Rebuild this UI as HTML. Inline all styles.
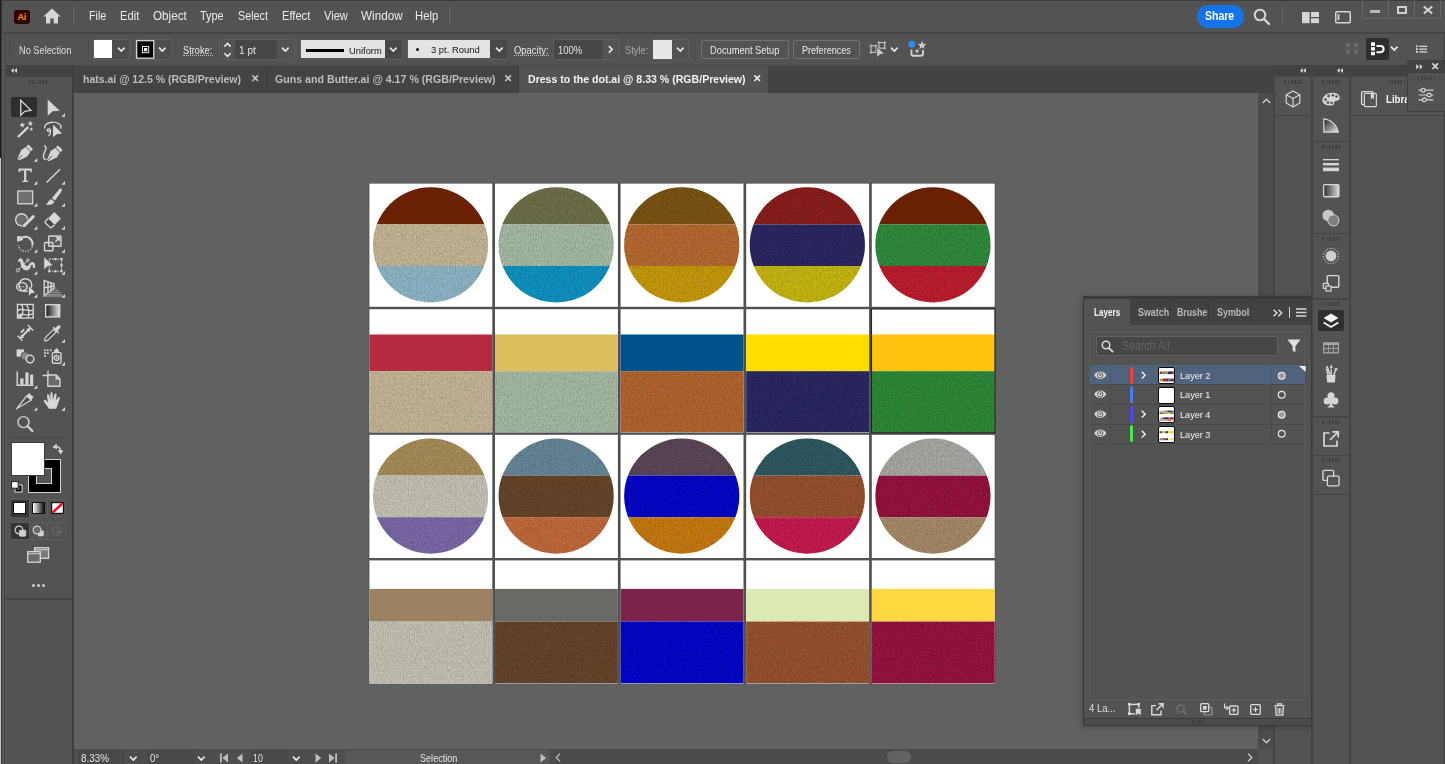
<!DOCTYPE html>
<html lang="en"><head><meta charset="utf-8"><title>Dress to the dot.ai @ 8.33 % (RGB/Preview)</title>
<style>
html,body{margin:0;padding:0;}
body{width:1445px;height:764px;overflow:hidden;background:#535353;position:relative;
font-family:"Liberation Sans",sans-serif;font-size:12px;color:#dddddd;}
div,svg{position:absolute;box-sizing:border-box;}
.t{white-space:nowrap;}
svg{overflow:visible;}
</style></head><body>

<div style="left:74px;top:92.7px;width:1184px;height:656.3px;background:#616161;"></div>
<div style="left:74px;top:65px;width:1199px;height:27.8px;background:#434343;"></div>
<div style="left:0px;top:32px;width:1445px;height:1.5px;background:#464646;"></div>
<div style="left:5px;top:64.5px;width:1445px;height:1px;background:#484848;"></div>
<div style="left:0px;top:0px;width:1445px;height:1px;background:#3c3c3c;"></div>
<div style="left:0px;top:0px;width:1px;height:158px;background:#1c1c1c;"></div>
<div style="left:0px;top:158px;width:1px;height:764px;background:#c4c4c4;"></div>
<div style="left:1px;top:0px;width:1px;height:764px;background:#363636;"></div>
<div style="left:2px;top:33px;width:1.8px;height:764px;background:#585858;"></div>
<div style="left:3.8px;top:33px;width:1.7px;height:764px;background:#474747;"></div>
<div style="left:1443px;top:33px;width:2px;height:764px;background:#474747;"></div>
<div style="left:14.3px;top:9.7px;width:15.4px;height:14.4px;background:#330000;border-radius:3px;"></div>
<div class="t" style="left:17.4px;top:9.8px;font-size:9px;color:#ff9a00;line-height:13px;font-weight:bold;line-height:14.4px;letter-spacing:-0.2px;">Ai</div>
<svg style="left:42.6px;top:8.2px;" width="18" height="16" viewBox="0 0 18 16"><path d="M9 0.6 L0.4 8.6 H3 V15.4 H7.3 V10.6 H10.7 V15.4 H15 V8.6 H17.6 Z" fill="#d6d6d6"/></svg>
<div style="left:73.2px;top:6.6px;width:1.7px;height:19.4px;background:#5e5e5e;"></div>
<div class="t" style="transform:scaleX(0.8943);transform-origin:0 50%;left:89px;top:7.6px;font-size:12px;line-height:16px;color:#ececec;">File</div>
<div class="t" style="transform:scaleX(0.9329);transform-origin:0 50%;left:120.3px;top:7.6px;font-size:12px;line-height:16px;color:#ececec;">Edit</div>
<div class="t" style="transform:scaleX(0.9715);transform-origin:0 50%;left:152.8px;top:7.6px;font-size:12px;line-height:16px;color:#ececec;">Object</div>
<div class="t" style="transform:scaleX(0.9110);transform-origin:0 50%;left:200.3px;top:7.6px;font-size:12px;line-height:16px;color:#ececec;">Type</div>
<div class="t" style="transform:scaleX(0.8963);transform-origin:0 50%;left:237.9px;top:7.6px;font-size:12px;line-height:16px;color:#ececec;">Select</div>
<div class="t" style="transform:scaleX(0.9288);transform-origin:0 50%;left:281.7px;top:7.6px;font-size:12px;line-height:16px;color:#ececec;">Effect</div>
<div class="t" style="transform:scaleX(0.9265);transform-origin:0 50%;left:323.9px;top:7.6px;font-size:12px;line-height:16px;color:#ececec;">View</div>
<div class="t" style="transform:scaleX(0.9745);transform-origin:0 50%;left:361.1px;top:7.6px;font-size:12px;line-height:16px;color:#ececec;">Window</div>
<div class="t" style="transform:scaleX(0.9397);transform-origin:0 50%;left:415.3px;top:7.6px;font-size:12px;line-height:16px;color:#ececec;">Help</div>
<div style="left:449.2px;top:6.6px;width:1.8px;height:19px;background:#5e5e5e;"></div>
<div style="left:1196.5px;top:4.5px;width:47px;height:23px;background:#1473e6;border-radius:12px;"></div>
<div class="t" style="transform:scaleX(0.8753);transform-origin:0 50%;left:1205.3px;top:8.4px;font-size:12px;line-height:16px;color:#fff;font-weight:bold;">Share</div>
<svg style="left:1253px;top:8px;" width="18" height="18" viewBox="0 0 18 18"><circle cx="7" cy="7" r="5.3" fill="none" stroke="#d6d6d6" stroke-width="2"/><path d="M11 11 L16 16" stroke="#d6d6d6" stroke-width="2.4" stroke-linecap="round"/></svg>
<div style="left:1282px;top:7px;width:1px;height:18px;background:#666;"></div>
<svg style="left:1302px;top:11.7px;" width="17" height="11.2" viewBox="0 0 17 11.2"><rect x="0" y="0" width="7.6" height="11.2" fill="#d6d6d6"/><rect x="9" y="0" width="8" height="5" fill="#d6d6d6"/><rect x="9" y="6.3" width="8" height="4.9" fill="#d6d6d6"/></svg>
<svg style="left:1335px;top:10.5px;" width="16" height="12.5" viewBox="0 0 16 12.5"><rect x="0.75" y="0.75" width="14.5" height="11" rx="1" fill="none" stroke="#d6d6d6" stroke-width="1.5"/><rect x="2.6" y="3" width="1.8" height="6" fill="#d6d6d6"/></svg>
<div style="left:1362px;top:-2px;width:79px;height:20.5px;border:1px solid #666;border-radius:3px;"></div>
<div style="left:1388px;top:0px;width:1px;height:18.5px;background:#666;"></div>
<div style="left:1414px;top:0px;width:1px;height:18.5px;background:#666;"></div>
<div style="left:1370.3px;top:10.2px;width:10px;height:3px;background:#b8b8b8;"></div>
<div style="left:1396.5px;top:6px;width:10px;height:7.5px;border:2px solid #cfcfcf;"></div>
<svg style="left:1423px;top:6px;" width="10" height="8" viewBox="0 0 10 8"><path d="M0.8 0.5 L9.2 7.5 M9.2 0.5 L0.8 7.5" stroke="#cfcfcf" stroke-width="2.2"/></svg>
<div style="left:9px;top:40.5px;width:1.4px;height:1.3px;background:#3f3f3f;"></div>
<div style="left:9px;top:43.1px;width:1.4px;height:1.3px;background:#3f3f3f;"></div>
<div style="left:9px;top:45.7px;width:1.4px;height:1.3px;background:#3f3f3f;"></div>
<div style="left:9px;top:48.3px;width:1.4px;height:1.3px;background:#3f3f3f;"></div>
<div style="left:9px;top:50.9px;width:1.4px;height:1.3px;background:#3f3f3f;"></div>
<div style="left:9px;top:53.5px;width:1.4px;height:1.3px;background:#3f3f3f;"></div>
<div style="left:9px;top:56.1px;width:1.4px;height:1.3px;background:#3f3f3f;"></div>
<div class="t" style="transform:scaleX(0.9223);transform-origin:0 50%;left:18.7px;top:43.2px;font-size:10px;line-height:15px;color:#dcdcdc;">No Selection</div>
<div style="left:87.5px;top:37px;width:1px;height:24px;background:#4c4c4c;"></div>
<div style="left:93px;top:39px;width:37px;height:21px;border:1px solid #5e5e5e;border-radius:2px;"></div>
<div style="left:112px;top:40px;width:17px;height:19px;background:#4e4e4e;"></div>
<div style="left:94px;top:40.3px;width:18px;height:18px;background:#ffffff;"></div>
<svg style="left:116.5px;top:46.2px;" width="8.6" height="6.6" viewBox="0 0 8.6 6.6"><path d="M1 1.65 L4.30 5.12 L7.60 1.65" fill="none" stroke="#ececec" stroke-width="1.6"/></svg>
<div style="left:135px;top:39px;width:37px;height:21px;border:1px solid #5e5e5e;border-radius:2px;"></div>
<div style="left:154px;top:40px;width:17px;height:19px;background:#4e4e4e;"></div>
<svg style="left:135.8px;top:40px;" width="18.4" height="18.8" viewBox="0 0 18.4 18.8"><rect x="0.65" y="0.65" width="17.1" height="17.5" fill="#000" stroke="#d4d4d4" stroke-width="1.3"/><rect x="6.5" y="6.5" width="6.2" height="6.2" fill="none" stroke="#e4e4e4" stroke-width="1"/><rect x="8" y="8" width="3.3" height="3.3" fill="#f4f4f4"/></svg>
<svg style="left:158.2px;top:46.2px;" width="8.6" height="6.6" viewBox="0 0 8.6 6.6"><path d="M1 1.65 L4.30 5.12 L7.60 1.65" fill="none" stroke="#ececec" stroke-width="1.6"/></svg>
<div class="t" style="transform:scaleX(0.9215);transform-origin:0 50%;left:183.4px;top:43.2px;font-size:10px;line-height:15px;color:#e8e8e8;">Stroke:</div>
<div style="left:183.4px;top:55.4px;width:29.2px;height:1px;border-top:1px dotted #bdbdbd;"></div>
<div style="left:219px;top:39px;width:75.5px;height:21px;border:1px solid #5e5e5e;border-radius:2px;"></div>
<svg style="left:222.6px;top:41.5px;" width="9" height="16" viewBox="0 0 9 16"><path d="M1.3 4.6 L4.5 1.4 L7.7 4.6 M1.3 11.2 L4.5 14.4 L7.7 11.2" fill="none" stroke="#ececec" stroke-width="1.5"/></svg>
<div style="left:235px;top:40px;width:41.5px;height:19px;background:#464646;"></div>
<div class="t" style="transform:scaleX(1.0067);transform-origin:0 50%;left:238.5px;top:43.2px;font-size:10px;line-height:15px;color:#e2e2e2;">1 pt</div>
<svg style="left:280.7px;top:46.2px;" width="8.6" height="6.6" viewBox="0 0 8.6 6.6"><path d="M1 1.65 L4.30 5.12 L7.60 1.65" fill="none" stroke="#ececec" stroke-width="1.6"/></svg>
<div style="left:300px;top:39.5px;width:103px;height:20px;border:1px solid #5e5e5e;border-radius:2px;"></div>
<div style="left:300.6px;top:40.2px;width:84.5px;height:18px;background:#e3e3e3;"></div>
<div style="left:385.1px;top:40.2px;width:16.9px;height:18px;background:#484848;"></div>
<div style="left:306px;top:49px;width:38px;height:3px;background:#000;"></div>
<div class="t" style="transform:scaleX(0.9564);transform-origin:0 50%;left:348.5px;top:44.2px;font-size:9.8px;line-height:14px;color:#141418;">Uniform</div>
<svg style="left:389.4px;top:46.2px;" width="8.6" height="6.6" viewBox="0 0 8.6 6.6"><path d="M1 1.65 L4.30 5.12 L7.60 1.65" fill="none" stroke="#ececec" stroke-width="1.6"/></svg>
<div style="left:407.3px;top:39.5px;width:100px;height:20px;border:1px solid #5e5e5e;border-radius:2px;"></div>
<div style="left:408.2px;top:40.2px;width:81.6px;height:18px;background:#e3e3e3;"></div>
<div style="left:489.8px;top:40.2px;width:17px;height:18px;background:#484848;"></div>
<div style="left:415.9px;top:48.3px;width:2.9px;height:2.9px;background:#111;border-radius:2px;"></div>
<div class="t" style="transform:scaleX(0.9614);transform-origin:0 50%;left:431.2px;top:43.1px;font-size:9.8px;line-height:14px;color:#141418;">3 pt. Round</div>
<svg style="left:494.7px;top:46.2px;" width="8.6" height="6.6" viewBox="0 0 8.6 6.6"><path d="M1 1.65 L4.30 5.12 L7.60 1.65" fill="none" stroke="#ececec" stroke-width="1.6"/></svg>
<div class="t" style="transform:scaleX(0.9431);transform-origin:0 50%;left:514.2px;top:43.2px;font-size:10px;line-height:15px;color:#e8e8e8;">Opacity:</div>
<div style="left:514.2px;top:55.4px;width:34.6px;height:1px;border-top:1px dotted #bdbdbd;"></div>
<div style="left:553px;top:39px;width:66px;height:21px;border:1px solid #5e5e5e;border-radius:2px;"></div>
<div style="left:554px;top:40px;width:48.3px;height:19px;background:#464646;"></div>
<div class="t" style="transform:scaleX(0.9461);transform-origin:0 50%;left:558.4px;top:43.2px;font-size:10px;line-height:15px;color:#e2e2e2;">100%</div>
<svg style="left:607.2px;top:45.2px;" width="6.6" height="8.6" viewBox="0 0 6.6 8.6"><path d="M1.81 1 L5.12 4.30 L1.81 7.60" fill="none" stroke="#ececec" stroke-width="1.6"/></svg>
<div class="t" style="transform:scaleX(0.9314);transform-origin:0 50%;left:624.5px;top:43.2px;font-size:10px;line-height:15px;color:#a8a8a8;">Style:</div>
<div style="left:652.5px;top:39px;width:36.5px;height:21px;border:1px solid #5e5e5e;border-radius:2px;"></div>
<div style="left:653.4px;top:40.3px;width:18.3px;height:18.3px;background:#e6e6e6;"></div>
<svg style="left:676.0px;top:46.2px;" width="8.6" height="6.6" viewBox="0 0 8.6 6.6"><path d="M1 1.65 L4.30 5.12 L7.60 1.65" fill="none" stroke="#ececec" stroke-width="1.6"/></svg>
<div style="left:695px;top:37px;width:1px;height:24px;background:#4c4c4c;"></div>
<div style="left:701px;top:40px;width:87.5px;height:19px;border:1px solid #717171;border-radius:2px;"></div>
<div class="t" style="transform:scaleX(0.9329);transform-origin:0 50%;left:710.2px;top:43.2px;font-size:10px;line-height:15px;color:#e8e8e8;">Document Setup</div>
<div style="left:793.3px;top:40px;width:66.5px;height:19px;border:1px solid #717171;border-radius:2px;"></div>
<div class="t" style="transform:scaleX(0.9050);transform-origin:0 50%;left:802.3px;top:43.2px;font-size:10px;line-height:15px;color:#e8e8e8;">Preferences</div>
<svg style="left:868px;top:40px;" width="20" height="19" viewBox="0 0 20 19"><g fill="none" stroke="#bdbdbd" stroke-width="1.2"><rect x="3" y="5.8" width="5" height="6.6"/><path d="M1.6 5.8 H3 V4.4 M8 4.4 V5.8 H9.4 M1.6 12.4 H3 V13.8"/><rect x="11" y="2.6" width="5.6" height="5.6"/><path d="M9.6 2.6 H11 V1.2 M16.6 1.2 V2.6 H18 M16.6 9.6 V8.2 H18 M9.6 8.2 H11"/></g><path d="M8.9 7 V17.4 L12 14.6 L16.4 13.7 Z" fill="#cfcfcf" stroke="#535353" stroke-width="0.7"/></svg>
<svg style="left:890.3000000000001px;top:45.6px;" width="8.6" height="6.6" viewBox="0 0 8.6 6.6"><path d="M1 1.65 L4.30 5.12 L7.60 1.65" fill="none" stroke="#ececec" stroke-width="1.6"/></svg>
<svg style="left:907px;top:39px;" width="20" height="20" viewBox="0 0 20 20"><path d="M4.4 10.4 V14.8 a2 2 0 0 0 2 2 H14 a2 2 0 0 0 2 -2 V11" fill="none" stroke="#cfcfcf" stroke-width="1.9"/><path d="M15.00 1.80 L16.14 4.84 L19.37 4.98 L16.84 7.00 L17.70 10.12 L15.00 8.33 L12.30 10.12 L13.16 7.00 L10.63 4.98 L13.86 4.84 Z" fill="#cfcfcf"/><path d="M10.00 9.60 L10.64 11.32 L12.47 11.40 L11.04 12.54 L11.53 14.30 L10.00 13.29 L8.47 14.30 L8.96 12.54 L7.53 11.40 L9.36 11.32 Z" fill="#cfcfcf"/><circle cx="4.8" cy="5.2" r="3.5" fill="#2d8ceb"/></svg>
<svg style="left:1346px;top:43px;" width="13" height="12" viewBox="0 0 13 12"><g fill="#6b6b6b"><rect x="0" y="0" width="4" height="4"/><rect x="8" y="0" width="4" height="4"/><rect x="0" y="7" width="4" height="4"/><rect x="8" y="7" width="4" height="4"/></g><path d="M6 -1 V12 M-1 5.5 H13" stroke="#606060" stroke-width="0.7"/></svg>
<div style="left:1366px;top:38px;width:22.5px;height:22px;background:#2e2e2e;border-radius:2px;"></div>
<svg style="left:1369.5px;top:41px;" width="16" height="16" viewBox="0 0 16 16"><g fill="#fff"><rect x="1" y="1.3" width="4" height="3.6" rx="0.6"/><rect x="1" y="6" width="4" height="3.6" rx="0.6"/><rect x="1" y="10.7" width="4" height="3.6" rx="0.6"/></g><path d="M6.5 5 H10.5 a3 3 0 0 1 0 6.2 H6.5" fill="none" stroke="#fff" stroke-width="2"/></svg>
<svg style="left:1390.3px;top:45.2px;" width="8.6" height="6.6" viewBox="0 0 8.6 6.6"><path d="M1 1.65 L4.30 5.12 L7.60 1.65" fill="none" stroke="#ececec" stroke-width="1.6"/></svg>
<svg style="left:1416.3px;top:45.2px;" width="11.4" height="8.4" viewBox="0 0 11.4 8.4"><g fill="#d6d6d6"><rect x="0" y="0.4" width="1.9" height="1.9"/><rect x="0" y="3.2" width="1.9" height="1.9"/><rect x="0" y="6" width="1.9" height="1.9"/><rect x="3.2" y="0.7" width="8" height="1.3"/><rect x="3.2" y="3.5" width="8" height="1.3"/><rect x="3.2" y="6.3" width="8" height="1.3"/></g></svg>
<div style="left:265.5px;top:66px;width:1px;height:26px;background:#3a3a3a;"></div>
<div style="left:518px;top:66px;width:1px;height:26px;background:#3a3a3a;"></div>
<div style="left:518.8px;top:65.5px;width:249px;height:27.3px;background:#535353;"></div>
<div class="t" style="transform:scaleX(1.0001);transform-origin:0 50%;left:83px;top:71.7px;font-size:10.5px;line-height:15px;color:#bcbcbc;font-weight:bold;">hats.ai @ 12.5 % (RGB/Preview)</div>
<svg style="left:252.10000000000002px;top:75.39999999999999px;" width="6.4" height="6.4" viewBox="0 0 6.4 6.4"><path d="M0.4 0.4 L6.0 6.0 M6.0 0.4 L0.4 6.0" stroke="#c4c4c4" stroke-width="1.6"/></svg>
<div class="t" style="transform:scaleX(1.0121);transform-origin:0 50%;left:275.4px;top:71.7px;font-size:10.5px;line-height:15px;color:#bcbcbc;font-weight:bold;">Guns and Butter.ai @ 4.17 % (RGB/Preview)</div>
<svg style="left:504.8px;top:75.39999999999999px;" width="6.4" height="6.4" viewBox="0 0 6.4 6.4"><path d="M0.4 0.4 L6.0 6.0 M6.0 0.4 L0.4 6.0" stroke="#c4c4c4" stroke-width="1.6"/></svg>
<div class="t" style="transform:scaleX(1.0064);transform-origin:0 50%;left:527.5px;top:71.7px;font-size:10.5px;line-height:15px;color:#f4f4f4;font-weight:bold;">Dress to the dot.ai @ 8.33 % (RGB/Preview)</div>
<svg style="left:754.3px;top:75.39999999999999px;" width="6.4" height="6.4" viewBox="0 0 6.4 6.4"><path d="M0.4 0.4 L6.0 6.0 M6.0 0.4 L0.4 6.0" stroke="#f0f0f0" stroke-width="1.6"/></svg>
<div style="left:1258px;top:92.7px;width:15px;height:656.3px;background:#4c4c4c;"></div>
<svg style="left:1261.5px;top:98px;" width="9" height="6" viewBox="0 0 9 6"><path d="M0.8 5 L4.5 1.2 L8.2 5" fill="none" stroke="#cfcfcf" stroke-width="1.3"/></svg>
<svg style="left:1261.5px;top:738px;" width="9" height="6" viewBox="0 0 9 6"><path d="M0.8 1 L4.5 4.8 L8.2 1" fill="none" stroke="#cfcfcf" stroke-width="1.3"/></svg>
<div style="left:1258px;top:749px;width:15px;height:15px;background:#535353;"></div>
<div style="left:1272.6px;top:65px;width:2.2px;height:764px;background:#454545;"></div>
<div style="left:74px;top:748.8px;width:1184px;height:16px;background:#4e4e4e;"></div>
<div style="left:78px;top:749.5px;width:47px;height:15px;background:#484848;"></div>
<div class="t" style="transform:scaleX(0.9402);transform-origin:0 50%;left:80.7px;top:751.3px;font-size:10.5px;line-height:15px;color:#e2e2e2;">8.33%</div>
<div style="left:125.8px;top:749.5px;width:15.5px;height:15px;background:#4c4c4c;"></div>
<svg style="left:129.2px;top:755.2px;" width="8.6" height="6.6" viewBox="0 0 8.6 6.6"><path d="M1 1.65 L4.30 5.12 L7.60 1.65" fill="none" stroke="#ececec" stroke-width="1.6"/></svg>
<div style="left:147.3px;top:749.5px;width:46.3px;height:15px;background:#484848;"></div>
<div class="t" style="transform:scaleX(0.9157);transform-origin:0 50%;left:149.6px;top:751.3px;font-size:10.5px;line-height:15px;color:#e2e2e2;">0°</div>
<div style="left:194.3px;top:749.5px;width:14.2px;height:15px;background:#4c4c4c;"></div>
<svg style="left:197.2px;top:755.2px;" width="8.6" height="6.6" viewBox="0 0 8.6 6.6"><path d="M1 1.65 L4.30 5.12 L7.60 1.65" fill="none" stroke="#ececec" stroke-width="1.6"/></svg>
<svg style="left:219px;top:752.5px;" width="10" height="10" viewBox="0 0 10 10"><rect x="1" y="0.5" width="1.8" height="9" fill="#bebebe"/><path d="M9 0.5 V9.5 L3.4 5 Z" fill="#bebebe"/></svg>
<svg style="left:235.5px;top:752.5px;" width="8" height="10" viewBox="0 0 8 10"><path d="M6.5 0.5 V9.5 L0.8 5 Z" fill="#bebebe"/></svg>
<div style="left:250.5px;top:749.5px;width:37.6px;height:15px;background:#484848;"></div>
<div class="t" style="transform:scaleX(0.8385);transform-origin:0 50%;left:253.2px;top:751.3px;font-size:10.5px;line-height:15px;color:#e2e2e2;">10</div>
<div style="left:289px;top:749.5px;width:14px;height:15px;background:#4c4c4c;"></div>
<svg style="left:291.9px;top:755.2px;" width="8.6" height="6.6" viewBox="0 0 8.6 6.6"><path d="M1 1.65 L4.30 5.12 L7.60 1.65" fill="none" stroke="#ececec" stroke-width="1.6"/></svg>
<svg style="left:313.5px;top:752.5px;" width="8" height="10" viewBox="0 0 8 10"><path d="M1.5 0.5 V9.5 L7.2 5 Z" fill="#bebebe"/></svg>
<svg style="left:328px;top:752.5px;" width="10" height="10" viewBox="0 0 10 10"><rect x="7.2" y="0.5" width="1.8" height="9" fill="#bebebe"/><path d="M1 0.5 V9.5 L6.6 5 Z" fill="#bebebe"/></svg>
<div style="left:344.8px;top:749.5px;width:205px;height:15px;background:#575757;border-radius:2px 2px 0 0;"></div>
<div class="t" style="transform:scaleX(0.8657);transform-origin:0 50%;left:420px;top:751.3px;font-size:10.5px;line-height:15px;color:#e2e2e2;">Selection</div>
<svg style="left:538.5px;top:752.5px;" width="8" height="10" viewBox="0 0 8 10"><path d="M1.5 0.5 V9.5 L7.2 5 Z" fill="#bebebe"/></svg>
<div style="left:550px;top:749px;width:708px;height:15px;background:#4b4b4b;"></div>
<svg style="left:555px;top:752.5px;" width="6" height="9" viewBox="0 0 6 9"><path d="M5 0.8 L1.2 4.5 L5 8.2" fill="none" stroke="#b8b8b8" stroke-width="1.3"/></svg>
<div style="left:887px;top:750.6px;width:24px;height:12.4px;background:#626262;border-radius:6.5px;"></div>
<svg style="left:1246.5px;top:752.5px;" width="6" height="9" viewBox="0 0 6 9"><path d="M1 0.8 L4.8 4.5 L1 8.2" fill="none" stroke="#cfcfcf" stroke-width="1.3"/></svg>
<svg style="left:0px;top:0px;pointer-events:none;" width="1445" height="764" viewBox="0 0 1445 764"><defs><pattern id="tex" width="2.6" height="2.6" patternUnits="userSpaceOnUse"><rect x="0" y="0" width="0.9" height="2.6" fill="#000" opacity="0.035"/><rect x="0" y="0" width="2.6" height="0.9" fill="#000" opacity="0.035"/></pattern><filter id="nzd" x="0" y="0" width="100%" height="100%" color-interpolation-filters="sRGB"><feTurbulence type="fractalNoise" baseFrequency="0.85 0.36" numOctaves="2" seed="4"/><feColorMatrix type="matrix" values="0 0 0 0 0  0 0 0 0 0  0 0 0 0 0  1.3 0 0 0 -0.45"/></filter><filter id="nzl" x="0" y="0" width="100%" height="100%" color-interpolation-filters="sRGB"><feTurbulence type="fractalNoise" baseFrequency="0.36 0.85" numOctaves="2" seed="11"/><feColorMatrix type="matrix" values="0 0 0 0 1  0 0 0 0 1  0 0 0 0 1  0 1.3 0 0 -0.45"/></filter><clipPath id="c00"><circle cx="430.55" cy="244.90" r="57.6"/></clipPath><clipPath id="c10"><circle cx="430.55" cy="496.10" r="57.6"/></clipPath><clipPath id="c01"><circle cx="556.15" cy="244.90" r="57.6"/></clipPath><clipPath id="c11"><circle cx="556.15" cy="496.10" r="57.6"/></clipPath><clipPath id="c02"><circle cx="681.75" cy="244.90" r="57.6"/></clipPath><clipPath id="c12"><circle cx="681.75" cy="496.10" r="57.6"/></clipPath><clipPath id="c03"><circle cx="807.35" cy="244.90" r="57.6"/></clipPath><clipPath id="c13"><circle cx="807.35" cy="496.10" r="57.6"/></clipPath><clipPath id="c04"><circle cx="932.95" cy="244.90" r="57.6"/></clipPath><clipPath id="c14"><circle cx="932.95" cy="496.10" r="57.6"/></clipPath></defs><rect x="368.59999999999997" y="182.79999999999998" width="626.90" height="501.40" fill="#515151"/><rect x="369.40" y="183.60" width="122.9" height="123.2" fill="#fff"/><rect x="495.00" y="183.60" width="122.9" height="123.2" fill="#fff"/><rect x="620.60" y="183.60" width="122.9" height="123.2" fill="#fff"/><rect x="746.20" y="183.60" width="122.9" height="123.2" fill="#fff"/><rect x="871.80" y="183.60" width="122.9" height="123.2" fill="#fff"/><rect x="369.40" y="309.20" width="122.9" height="123.2" fill="#fff"/><rect x="495.00" y="309.20" width="122.9" height="123.2" fill="#fff"/><rect x="620.60" y="309.20" width="122.9" height="123.2" fill="#fff"/><rect x="746.20" y="309.20" width="122.9" height="123.2" fill="#fff"/><rect x="871.80" y="309.20" width="122.9" height="123.2" fill="#fff"/><rect x="369.40" y="434.80" width="122.9" height="123.2" fill="#fff"/><rect x="495.00" y="434.80" width="122.9" height="123.2" fill="#fff"/><rect x="620.60" y="434.80" width="122.9" height="123.2" fill="#fff"/><rect x="746.20" y="434.80" width="122.9" height="123.2" fill="#fff"/><rect x="871.80" y="434.80" width="122.9" height="123.2" fill="#fff"/><rect x="369.40" y="560.40" width="122.9" height="123.2" fill="#fff"/><rect x="495.00" y="560.40" width="122.9" height="123.2" fill="#fff"/><rect x="620.60" y="560.40" width="122.9" height="123.2" fill="#fff"/><rect x="746.20" y="560.40" width="122.9" height="123.2" fill="#fff"/><rect x="871.80" y="560.40" width="122.9" height="123.2" fill="#fff"/><rect clip-path="url(#c00)" x="369.40" y="186.20" width="122.90" height="38.20" fill="#6a2103"/><rect clip-path="url(#c00)" x="369.40" y="224.40" width="122.90" height="41.60" fill="#c9b898"/><rect clip-path="url(#c00)" x="369.40" y="266.00" width="122.90" height="37.60" fill="#8fb9cb"/><rect clip-path="url(#c10)" x="369.40" y="437.40" width="122.90" height="38.20" fill="#a88f58"/><rect clip-path="url(#c10)" x="369.40" y="475.60" width="122.90" height="41.60" fill="#c9c5b8"/><rect clip-path="url(#c10)" x="369.40" y="517.20" width="122.90" height="37.60" fill="#7b68a8"/><rect x="369.40" y="334.50" width="122.90" height="36.70" fill="#b52a3c"/><rect x="369.40" y="371.20" width="122.90" height="60.80" fill="#c9b898"/><rect x="369.40" y="588.90" width="122.90" height="32.70" fill="#9c8162"/><rect x="369.40" y="621.60" width="122.90" height="61.60" fill="#c9c5b8"/><rect clip-path="url(#c01)" x="495.00" y="186.20" width="122.90" height="38.20" fill="#6f6f47"/><rect clip-path="url(#c01)" x="495.00" y="224.40" width="122.90" height="41.60" fill="#a8bda6"/><rect clip-path="url(#c01)" x="495.00" y="266.00" width="122.90" height="37.60" fill="#0a93c4"/><rect clip-path="url(#c11)" x="495.00" y="437.40" width="122.90" height="38.20" fill="#668799"/><rect clip-path="url(#c11)" x="495.00" y="475.60" width="122.90" height="41.60" fill="#654327"/><rect clip-path="url(#c11)" x="495.00" y="517.20" width="122.90" height="37.60" fill="#c4693a"/><rect x="495.00" y="334.50" width="122.90" height="36.70" fill="#dcbe5c"/><rect x="495.00" y="371.20" width="122.90" height="60.80" fill="#a8bda6"/><rect x="495.00" y="588.90" width="122.90" height="32.70" fill="#696a66"/><rect x="495.00" y="621.60" width="122.90" height="61.60" fill="#654327"/><rect clip-path="url(#c02)" x="620.60" y="186.20" width="122.90" height="38.20" fill="#7b540f"/><rect clip-path="url(#c02)" x="620.60" y="224.40" width="122.90" height="41.60" fill="#b96a2e"/><rect clip-path="url(#c02)" x="620.60" y="266.00" width="122.90" height="37.60" fill="#c89b08"/><rect clip-path="url(#c12)" x="620.60" y="437.40" width="122.90" height="38.20" fill="#5a4556"/><rect clip-path="url(#c12)" x="620.60" y="475.60" width="122.90" height="41.60" fill="#0000cc"/><rect clip-path="url(#c12)" x="620.60" y="517.20" width="122.90" height="37.60" fill="#c97a0d"/><rect x="620.60" y="334.50" width="122.90" height="36.70" fill="#00528a"/><rect x="620.60" y="371.20" width="122.90" height="60.80" fill="#b4642b"/><rect x="620.60" y="588.90" width="122.90" height="32.70" fill="#7a244c"/><rect x="620.60" y="621.60" width="122.90" height="61.60" fill="#0000cc"/><rect clip-path="url(#c03)" x="746.20" y="186.20" width="122.90" height="38.20" fill="#8a1b16"/><rect clip-path="url(#c03)" x="746.20" y="224.40" width="122.90" height="41.60" fill="#272560"/><rect clip-path="url(#c03)" x="746.20" y="266.00" width="122.90" height="37.60" fill="#c9b90e"/><rect clip-path="url(#c13)" x="746.20" y="437.40" width="122.90" height="38.20" fill="#2c5862"/><rect clip-path="url(#c13)" x="746.20" y="475.60" width="122.90" height="41.60" fill="#97502a"/><rect clip-path="url(#c13)" x="746.20" y="517.20" width="122.90" height="37.60" fill="#c9174f"/><rect x="746.20" y="334.50" width="122.90" height="36.70" fill="#ffdd00"/><rect x="746.20" y="371.20" width="122.90" height="60.80" fill="#272560"/><rect x="746.20" y="588.90" width="122.90" height="32.70" fill="#dde9b5"/><rect x="746.20" y="621.60" width="122.90" height="61.60" fill="#97502a"/><rect clip-path="url(#c04)" x="871.80" y="186.20" width="122.90" height="38.20" fill="#6a2103"/><rect clip-path="url(#c04)" x="871.80" y="224.40" width="122.90" height="41.60" fill="#2d8b3a"/><rect clip-path="url(#c04)" x="871.80" y="266.00" width="122.90" height="37.60" fill="#c01a2a"/><rect clip-path="url(#c14)" x="871.80" y="437.40" width="122.90" height="38.20" fill="#a9aaa5"/><rect clip-path="url(#c14)" x="871.80" y="475.60" width="122.90" height="41.60" fill="#960e3c"/><rect clip-path="url(#c14)" x="871.80" y="517.20" width="122.90" height="37.60" fill="#a98b68"/><rect x="871.80" y="334.50" width="122.90" height="36.70" fill="#ffc20f"/><rect x="871.80" y="371.20" width="122.90" height="60.80" fill="#2a8a35"/><rect x="871.80" y="588.90" width="122.90" height="32.70" fill="#ffd83f"/><rect x="871.80" y="621.60" width="122.90" height="61.60" fill="#960e3c"/><mask id="tm" maskUnits="userSpaceOnUse" x="360" y="175" width="645" height="520"><rect clip-path="url(#c00)" x="369.40" y="224.40" width="122.90" height="41.60" fill="#fff"/><rect clip-path="url(#c00)" x="369.40" y="266.00" width="122.90" height="37.60" fill="#fff"/><rect clip-path="url(#c10)" x="369.40" y="437.40" width="122.90" height="38.20" fill="#fff"/><rect clip-path="url(#c10)" x="369.40" y="475.60" width="122.90" height="41.60" fill="#fff"/><rect clip-path="url(#c10)" x="369.40" y="517.20" width="122.90" height="37.60" fill="#fff"/><rect x="369.40" y="371.20" width="122.90" height="60.80" fill="#fff"/><rect x="369.40" y="621.60" width="122.90" height="61.60" fill="#fff"/><rect clip-path="url(#c01)" x="495.00" y="186.20" width="122.90" height="38.20" fill="#fff"/><rect clip-path="url(#c01)" x="495.00" y="224.40" width="122.90" height="41.60" fill="#fff"/><rect clip-path="url(#c01)" x="495.00" y="266.00" width="122.90" height="37.60" fill="#fff"/><rect clip-path="url(#c11)" x="495.00" y="437.40" width="122.90" height="38.20" fill="#fff"/><rect clip-path="url(#c11)" x="495.00" y="475.60" width="122.90" height="41.60" fill="#fff"/><rect clip-path="url(#c11)" x="495.00" y="517.20" width="122.90" height="37.60" fill="#fff"/><rect x="495.00" y="371.20" width="122.90" height="60.80" fill="#fff"/><rect x="495.00" y="621.60" width="122.90" height="61.60" fill="#fff"/><rect clip-path="url(#c02)" x="620.60" y="186.20" width="122.90" height="38.20" fill="#fff"/><rect clip-path="url(#c02)" x="620.60" y="224.40" width="122.90" height="41.60" fill="#fff"/><rect clip-path="url(#c02)" x="620.60" y="266.00" width="122.90" height="37.60" fill="#fff"/><rect clip-path="url(#c12)" x="620.60" y="437.40" width="122.90" height="38.20" fill="#fff"/><rect clip-path="url(#c12)" x="620.60" y="475.60" width="122.90" height="41.60" fill="#fff"/><rect clip-path="url(#c12)" x="620.60" y="517.20" width="122.90" height="37.60" fill="#fff"/><rect x="620.60" y="371.20" width="122.90" height="60.80" fill="#fff"/><rect x="620.60" y="621.60" width="122.90" height="61.60" fill="#fff"/><rect clip-path="url(#c03)" x="746.20" y="186.20" width="122.90" height="38.20" fill="#fff"/><rect clip-path="url(#c03)" x="746.20" y="224.40" width="122.90" height="41.60" fill="#fff"/><rect clip-path="url(#c03)" x="746.20" y="266.00" width="122.90" height="37.60" fill="#fff"/><rect clip-path="url(#c13)" x="746.20" y="437.40" width="122.90" height="38.20" fill="#fff"/><rect clip-path="url(#c13)" x="746.20" y="475.60" width="122.90" height="41.60" fill="#fff"/><rect clip-path="url(#c13)" x="746.20" y="517.20" width="122.90" height="37.60" fill="#fff"/><rect x="746.20" y="371.20" width="122.90" height="60.80" fill="#fff"/><rect x="746.20" y="621.60" width="122.90" height="61.60" fill="#fff"/><rect clip-path="url(#c04)" x="871.80" y="224.40" width="122.90" height="41.60" fill="#fff"/><rect clip-path="url(#c04)" x="871.80" y="266.00" width="122.90" height="37.60" fill="#fff"/><rect clip-path="url(#c14)" x="871.80" y="437.40" width="122.90" height="38.20" fill="#fff"/><rect clip-path="url(#c14)" x="871.80" y="475.60" width="122.90" height="41.60" fill="#fff"/><rect clip-path="url(#c14)" x="871.80" y="517.20" width="122.90" height="37.60" fill="#fff"/><rect x="871.80" y="371.20" width="122.90" height="60.80" fill="#fff"/><rect x="871.80" y="621.60" width="122.90" height="61.60" fill="#fff"/></mask><g mask="url(#tm)"><rect x="366" y="180" width="632" height="507" fill="url(#tex)"/><rect x="366" y="180" width="632" height="507" filter="url(#nzd)" opacity="0.26"/><rect x="366" y="180" width="632" height="507" filter="url(#nzl)" opacity="0.09"/></g><rect x="871.50" y="308.90" width="123.5" height="123.8" fill="none" stroke="#222" stroke-width="1.1"/></svg>
<div style="left:5.5px;top:65px;width:66px;height:12px;background:#424242;"></div>
<div style="left:71.5px;top:65px;width:2.5px;height:764px;background:#3e3e3e;"></div>
<div style="left:5.5px;top:597.5px;width:66px;height:2px;background:#454545;"></div>
<svg style="left:11.2px;top:68.4px;" width="6.4" height="5" viewBox="0 0 6.4 5"><path d="M2.7 0 L0 2.5 L2.7 5 Z M6 0 L3.3 2.5 L6 5 Z" fill="#d8d8d8"/></svg>
<div style="left:29.0px;top:80px;width:1.9px;height:4px;background:#424242;"></div>
<div style="left:32.25px;top:80px;width:1.9px;height:4px;background:#424242;"></div>
<div style="left:35.5px;top:80px;width:1.9px;height:4px;background:#424242;"></div>
<div style="left:38.75px;top:80px;width:1.9px;height:4px;background:#424242;"></div>
<div style="left:42.0px;top:80px;width:1.9px;height:4px;background:#424242;"></div>
<div style="left:45.25px;top:80px;width:1.9px;height:4px;background:#424242;"></div>
<div style="left:11px;top:96.6px;width:26.2px;height:20.3px;background:#2e2e2e;border-radius:2px;"></div>
<svg style="left:12.600000000000001px;top:96.6px;" width="24" height="22" viewBox="-12 -11 24 22"><path d="M-4.3 -7.6 V7.2 L-0.2 3.3 L6 2.3 Z" fill="#2e2e2e" stroke="#d6d6d6" stroke-width="1.3" stroke-linejoin="miter"/></svg>
<svg style="left:42.2px;top:96.6px;" width="24" height="22" viewBox="-12 -11 24 22"><path d="M-6.3 -8.4 V7.8 L-1.4 3.2 L5.8 2.8 Z" fill="#d6d6d6"/><path d="M11.0 8.7 V5.1 L7.4 8.7 Z" fill="#d6d6d6"/></svg>
<svg style="left:12.600000000000001px;top:119.25999999999999px;" width="24" height="22" viewBox="-12 -11 24 22"><path d="M-7 7 L3.2 -2.9" stroke="#d6d6d6" stroke-width="2.3"/><path d="M-2.70 -8.10 L-1.93 -6.05 L0.25 -5.96 L-1.46 -4.60 L-0.88 -2.49 L-2.70 -3.70 L-4.52 -2.49 L-3.94 -4.60 L-5.65 -5.96 L-3.47 -6.05 Z" fill="#d6d6d6"/><path d="M5.30 -9.30 L6.02 -7.39 L8.06 -7.30 L6.46 -6.02 L7.00 -4.05 L5.30 -5.18 L3.60 -4.05 L4.14 -6.02 L2.54 -7.30 L4.58 -7.39 Z" fill="#d6d6d6"/><path d="M6.30 -2.80 L6.82 -1.41 L8.30 -1.35 L7.14 -0.43 L7.53 1.00 L6.30 0.18 L5.07 1.00 L5.46 -0.43 L4.30 -1.35 L5.78 -1.41 Z" fill="#d6d6d6"/></svg>
<svg style="left:42.2px;top:119.25999999999999px;" width="24" height="22" viewBox="-12 -11 24 22"><path d="M6.6 -1.4 C8.4 -5.4 3 -8.2 -2 -7.8 C-7 -7.4 -10.2 -4.6 -9.2 -1.6" fill="none" stroke="#d6d6d6" stroke-width="1.4" stroke-width="1.3"/><path d="M-3.6 0.6 C-3.4 -1.6 -6.6 -1.8 -6.6 0.2 C-6.6 2 -3.8 1.6 -3.8 0 C-3.4 2.2 -3.6 4.6 -5.6 5.8" fill="none" stroke="#d6d6d6" stroke-width="1.4" stroke-width="1.3"/><path d="M-1 -5.6 V7.4 L2.5 4.2 L8.2 3.4 Z" fill="#d6d6d6"/></svg>
<svg style="left:12.600000000000001px;top:141.92px;" width="24" height="22" viewBox="-12 -11 24 22"><path d="M-7.6 6 L-3.8 -3 L0.9 -5.9 L5.2 -1 L2.2 3.6 L-6 7.4 Z" fill="#d6d6d6"/><path d="M1.2 -6.5 L3.5 -8.4 L8 -3.8 L5.8 -1.5 Z" fill="#d6d6d6"/><path d="M-7 6.6 L-2.6 2" stroke="#535353" stroke-width="0.9"/><path d="M12.3 8.7 V5.1 L8.7 8.7 Z" fill="#d6d6d6"/></svg>
<svg style="left:42.2px;top:141.92px;" width="24" height="22" viewBox="-12 -11 24 22"><g transform="translate(0.6,0.8)"><path d="M-7.6 6 L-3.8 -3 L0.9 -5.9 L5.2 -1 L2.2 3.6 L-6 7.4 Z" fill="#d6d6d6"/><path d="M1.2 -6.5 L3.5 -8.4 L8 -3.8 L5.8 -1.5 Z" fill="#d6d6d6"/><path d="M-7 6.6 L-2.6 2" stroke="#535353" stroke-width="0.9"/></g><path d="M-9.8 -7.3 C-8.2 -6.4 -7.4 -5.4 -8.2 -3.6 C-9.2 -1.4 -10.6 1 -10.6 3.4 C-10.6 5.4 -9.6 6.6 -7.6 6.6" fill="none" stroke="#d6d6d6" stroke-width="1.4" stroke-width="1.2"/></svg>
<svg style="left:12.600000000000001px;top:164.57999999999998px;" width="24" height="22" viewBox="-12 -11 24 22"><path d="M-6.4 -7.4 H6.8 V-3.8 H5.6 L5 -5.6 H1.3 V4.4 L3.2 4.9 V6 H-2.8 V4.9 L-0.9 4.4 V-5.6 H-4.6 L-5.2 -3.8 H-6.4 Z" fill="#d6d6d6"/><path d="M12.3 8.7 V5.1 L8.7 8.7 Z" fill="#d6d6d6"/></svg>
<svg style="left:42.2px;top:164.57999999999998px;" width="24" height="22" viewBox="-12 -11 24 22"><path d="M-7.4 6.6 L6 -6.8" stroke="#d6d6d6" stroke-width="1.4"/><path d="M11.0 8.7 V5.1 L7.4 8.7 Z" fill="#d6d6d6"/></svg>
<svg style="left:12.600000000000001px;top:187.24px;" width="24" height="22" viewBox="-12 -11 24 22"><rect x="-7.2" y="-7" width="14.8" height="12.8" fill="#6e6e6e" stroke="#d6d6d6" stroke-width="1.3"/><path d="M12.3 8.7 V5.1 L8.7 8.7 Z" fill="#d6d6d6"/></svg>
<svg style="left:42.2px;top:187.24px;" width="24" height="22" viewBox="-12 -11 24 22"><path d="M7 -9.4 C8.2 -8.8 8.2 -7.8 7.6 -6.8 L1 2.6 L-2.2 0.2 L5.2 -8.8 C5.8 -9.5 6.4 -9.7 7 -9.4 Z" fill="#d6d6d6"/><path d="M-3 1.2 L0.2 3.6 C0 6.6 -3.9 7.4 -8.4 6.6 C-6 5.4 -6 2.6 -3 1.2 Z" fill="#d6d6d6"/><path d="M11.0 8.7 V5.1 L7.4 8.7 Z" fill="#d6d6d6"/></svg>
<svg style="left:12.600000000000001px;top:209.89999999999998px;" width="24" height="22" viewBox="-12 -11 24 22"><circle cx="-3.4" cy="-1.3" r="6" fill="#6c6c6c" stroke="#d6d6d6" stroke-width="1.4"/><path d="M-0.4 4.2 L8.2 -4.4" stroke="#535353" stroke-width="4.8" stroke-linecap="round"/><path d="M-0.2 4 L8.2 -4.4" stroke="#d6d6d6" stroke-width="3" stroke-linecap="round"/><path d="M-2.6 6.6 L-1.6 3.2 L0.8 5.6 Z" fill="#d6d6d6"/><path d="M12.3 8.7 V5.1 L8.7 8.7 Z" fill="#d6d6d6"/></svg>
<svg style="left:42.2px;top:209.89999999999998px;" width="24" height="22" viewBox="-12 -11 24 22"><path d="M0.3 -9.1 L6.9 -2.2 L0.6 4.1 L-6 -2.5 Z" fill="#d6d6d6"/><path d="M-6 -2.5 L-9.1 1.2 L-3.5 6.9 L0.6 4.1" fill="#4a4a4a" stroke="#d6d6d6" stroke-width="1.3" stroke-linejoin="round"/><path d="M11.0 8.7 V5.1 L7.4 8.7 Z" fill="#d6d6d6"/></svg>
<svg style="left:12.600000000000001px;top:232.56px;" width="24" height="22" viewBox="-12 -11 24 22"><path d="M-2.8 -6.4 A7.2 7.2 0 0 1 7.4 1.6" fill="none" stroke="#d6d6d6" stroke-width="2"/><path d="M-7.9 -8 L-3.2 -7.6 L-1.8 -4 L-7.9 -2.2 Z" fill="#d6d6d6"/><path d="M7.3 2.6 A7.2 7.2 0 0 1 -6.6 1.4" fill="none" stroke="#d6d6d6" stroke-width="1.4" stroke-dasharray="1.1 1.5"/><path d="M12.3 8.7 V5.1 L8.7 8.7 Z" fill="#d6d6d6"/></svg>
<svg style="left:42.2px;top:232.56px;" width="24" height="22" viewBox="-12 -11 24 22"><rect x="-5.4" y="-8" width="12.4" height="10.2" rx="0.8" fill="#5e5e5e" stroke="#d6d6d6" stroke-width="1.4"/><rect x="-9.5" y="-1.5" width="8.4" height="8.2" rx="0.8" fill="none" stroke="#d6d6d6" stroke-width="1.4"/><path d="M1.4 -2.2 L5 -5.8 M2.2 -6.2 H5.4 V-3" fill="none" stroke="#d6d6d6" stroke-width="1.4" stroke-width="1.2"/><path d="M11.0 8.7 V5.1 L7.4 8.7 Z" fill="#d6d6d6"/></svg>
<svg style="left:12.600000000000001px;top:255.22000000000003px;" width="24" height="22" viewBox="-12 -11 24 22"><path d="M-7 -4.2 C-7.2 -8.2 -2.8 -9 -2 -5.6 C-1.2 -2.6 -0.2 -0.2 2 0 C4.2 0.2 4.4 -4.2 7.4 -4 C10.2 -3.8 10.2 0 10 2 L7.8 1.8 C7.8 -0.4 7.6 -1.4 7 -1.4 C5.8 -1.2 5.8 4.2 1.6 4.4 C-3.2 4.6 -4.2 -1.4 -4.8 -4.2 C-5 -5.3 -5.4 -5 -5.3 -4.2 Z" fill="#d6d6d6"/><path d="M-6.4 3.6 L2.4 -5.2" stroke="#d6d6d6" stroke-width="1"/><circle cx="-7.2" cy="4.4" r="1.5" fill="#535353" stroke="#d6d6d6" stroke-width="1"/><circle cx="3" cy="-5.8" r="1.3" fill="#535353" stroke="#d6d6d6" stroke-width="1"/><path d="M12.3 8.7 V5.1 L8.7 8.7 Z" fill="#d6d6d6"/></svg>
<svg style="left:42.2px;top:255.22000000000003px;" width="24" height="22" viewBox="-12 -11 24 22"><rect x="-4.7" y="-6.9" width="12.2" height="12.2" fill="none" stroke="#d6d6d6" stroke-width="1.1" stroke-dasharray="1.6 1.1"/><g fill="#d6d6d6"><rect x="-5.8" y="4.2" width="2.2" height="2.2"/><rect x="6.4" y="4.2" width="2.2" height="2.2"/><rect x="6.4" y="-8" width="2.2" height="2.2"/><rect x="0.3" y="4.2" width="2.2" height="2.2"/><rect x="6.4" y="-1.9" width="2.2" height="2.2"/><rect x="0.3" y="-8" width="2.2" height="2.2"/></g><path d="M-10.1 -9.3 V3.8 L-6.4 0.4 L-0.8 -0.6 Z" fill="#d6d6d6" stroke="#535353" stroke-width="0.6"/><path d="M11.0 8.7 V5.1 L7.4 8.7 Z" fill="#d6d6d6"/></svg>
<svg style="left:12.600000000000001px;top:277.88px;" width="24" height="22" viewBox="-12 -11 24 22"><circle cx="0.4" cy="-3.9" r="6.4" fill="none" stroke="#d6d6d6" stroke-width="1.4" stroke-width="1.2"/><ellipse cx="-3.1" cy="-2.3" rx="5.3" ry="4.1" fill="none" stroke="#d6d6d6" stroke-width="1.4" stroke-width="1.2"/><path d="M-7 -2.3 H3.2" stroke="#d6d6d6" stroke-width="1" stroke-dasharray="1.3 1.1"/><path d="M3.5 -3.4 V7.4 L6.4 4.7 L10.8 3.7 Z" fill="#d6d6d6" stroke="#535353" stroke-width="0.8"/><path d="M12.3 8.7 V5.1 L8.7 8.7 Z" fill="#d6d6d6"/></svg>
<svg style="left:42.2px;top:277.88px;" width="24" height="22" viewBox="-12 -11 24 22"><path d="M-9.8 -8.6 V6.8 L0 -0.7 V-5.1 Z" fill="none" stroke="#d6d6d6" stroke-width="1.4" stroke-width="1.3"/><path d="M-9.8 -1.2 L0 -3 M-6 -7.2 V3.8 M-2.9 -6.2 V1.6" fill="none" stroke="#d6d6d6" stroke-width="1.4" stroke-width="1.2"/><path d="M0.6 -1 H2.8 M-2 1.2 H4.7 M-4.6 3.4 H6.3 M-7.2 5.4 H7.8" stroke="#8c8c8c" stroke-width="1.1"/><path d="M-9.8 7 H8.5" stroke="#a4a4a4" stroke-width="1.1"/><path d="M11.0 8.7 V5.1 L7.4 8.7 Z" fill="#d6d6d6"/></svg>
<svg style="left:12.600000000000001px;top:300.53999999999996px;" width="24" height="22" viewBox="-12 -11 24 22"><rect x="-7.5" y="-7.5" width="15.7" height="13.5" fill="#484848" stroke="#d6d6d6" stroke-width="1.4"/><path d="M-7.4 -1.4 C-3.4 -4.6 1.4 -0.6 8 -1.6 M-7.4 3.6 C-3 -0.4 2 5.6 8 1.6 M-3.6 -7.4 C-0.8 -3.4 -2.2 2 -4.4 6 M1.4 -7.4 C4.6 -3 4.2 1.6 3 6 M-7 5.6 L-2 1.2" fill="none" stroke="#d6d6d6" stroke-width="1.4" stroke-width="1.1"/></svg>
<svg style="left:45.1px;top:304.03999999999996px;" width="15.4" height="13.6" viewBox="0 0 15.4 13.6"><defs><linearGradient id="gt"><stop offset="0.05" stop-color="#1e1e1e"/><stop offset="0.9" stop-color="#cfcfcf"/></linearGradient></defs><rect x="0.7" y="0.7" width="14" height="12.2" fill="url(#gt)" stroke="#d6d6d6" stroke-width="1.4"/></svg>
<svg style="left:12.600000000000001px;top:323.2px;" width="24" height="22" viewBox="-12 -11 24 22"><path d="M-7.5 1.8 L-2.5 6.8 M2.9 -8.9 L8.2 -3.5" stroke="#d6d6d6" stroke-width="1.4"/><path d="M-3.6 3 L4.2 -4.8" stroke="#d6d6d6" stroke-width="2"/><path d="M-5.4 5 L-0.8 3.6 L-4 0.4 Z M5.8 -6.4 L1.4 -5 L4.6 -1.8 Z" fill="#d6d6d6"/><path d="M-3.6 -2 L-1.4 -4.2" stroke="#d6d6d6" stroke-width="1.9" stroke-linecap="round"/></svg>
<svg style="left:42.2px;top:323.2px;" width="24" height="22" viewBox="-12 -11 24 22"><path d="M-9.2 6.6 C-9.8 5 -8.6 3.6 -7.6 2.6 L-0.6 -4.4 L2 -1.8 L-5 5.2 C-6.2 6.4 -7.6 7.4 -9.2 6.6 Z" fill="#4a4a4a" stroke="#d6d6d6" stroke-width="1.2"/><path d="M-1.6 -6.2 L4.2 -0.4 L5.2 -1.6 L3.8 -3.2 L5.8 -5.4 C7.8 -7.6 5.6 -10 3.4 -8 L1.2 -5.8 L-0.2 -7.2 Z" fill="#d6d6d6"/><path d="M11.0 8.7 V5.1 L7.4 8.7 Z" fill="#d6d6d6"/></svg>
<svg style="left:12.600000000000001px;top:345.86px;" width="24" height="22" viewBox="-12 -11 24 22"><rect x="-8.4" y="-7.6" width="7.5" height="7.2" fill="#d6d6d6"/><circle cx="0" cy="-1" r="4" fill="#8a8a8a" stroke="#535353" stroke-width="0.9"/><circle cx="5.1" cy="2.1" r="3.8" fill="#535353" stroke="#d6d6d6" stroke-width="1.5"/></svg>
<svg style="left:42.2px;top:345.86px;" width="24" height="22" viewBox="-12 -11 24 22"><rect x="-1.6" y="-4.4" width="8.6" height="10.6" rx="1.2" fill="#4a4a4a" stroke="#d6d6d6" stroke-width="1.4"/><rect x="0.2" y="-7" width="4.6" height="2.6" fill="#d6d6d6"/><rect x="1.4" y="-8.4" width="2.6" height="1.6" fill="#d6d6d6"/><circle cx="2.6" cy="0.9" r="2.4" fill="none" stroke="#d6d6d6" stroke-width="1.4" stroke-width="1.3"/><circle cx="2.6" cy="0.9" r="0.9" fill="#d6d6d6"/><g fill="#d6d6d6"><rect x="-10" y="-7.6" width="1.8" height="1.8"/><rect x="-7.2" y="-7.6" width="1.8" height="1.8"/><rect x="-4.2" y="-7.6" width="1.8" height="1.8"/><rect x="-10" y="-4.8" width="1.8" height="1.8"/><rect x="-7.2" y="-4.8" width="1.8" height="1.8"/><rect x="-10" y="-2" width="1.8" height="1.8"/></g><path d="M11.0 8.7 V5.1 L7.4 8.7 Z" fill="#d6d6d6"/></svg>
<svg style="left:12.600000000000001px;top:368.52px;" width="24" height="22" viewBox="-12 -11 24 22"><path d="M-7.8 -8.6 V5.3 H8.5" fill="none" stroke="#d6d6d6" stroke-width="1.4" stroke-width="1.4"/><rect x="-4.7" y="-1.6" width="3.2" height="6.4" fill="#d6d6d6"/><rect x="0.4" y="-7.6" width="3.1" height="12.4" fill="#d6d6d6"/><rect x="5.1" y="-5.4" width="3.1" height="10.2" fill="#d6d6d6"/><path d="M12.3 8.7 V5.1 L8.7 8.7 Z" fill="#d6d6d6"/></svg>
<svg style="left:42.2px;top:368.52px;" width="24" height="22" viewBox="-12 -11 24 22"><path d="M-6 -9.6 V-5 M-11.4 -4.5 H-6.4" stroke="#d6d6d6" stroke-width="1.3"/><path d="M-6.2 -5 H2.2 L5.9 -1.3 V6.2 H-6.2 Z" fill="#6a6a6a" stroke="#d6d6d6" stroke-width="1.4" stroke-linejoin="round"/><path d="M2.2 -5 V-1.3 H5.9" fill="none" stroke="#d6d6d6" stroke-width="1.4" stroke-width="1"/></svg>
<svg style="left:12.600000000000001px;top:391.17999999999995px;" width="24" height="22" viewBox="-12 -11 24 22"><path d="M-8.4 6.8 L1.6 -6 L6.3 -2 Z" fill="#4a4a4a" stroke="#d6d6d6" stroke-width="1.3" stroke-linejoin="round"/><path d="M1.6 -6 L3.8 -8.9 L8.5 -5.1 L6.3 -2 Z" fill="#d6d6d6"/><path d="M12.3 8.7 V5.1 L8.7 8.7 Z" fill="#d6d6d6"/></svg>
<svg style="left:42.2px;top:391.17999999999995px;" width="24" height="22" viewBox="-12 -11 24 22"><g transform="translate(-1.6,-0.9)"><path d="M-3.4 7.6 C-5 5 -7.6 2.4 -8.6 0 C-8.8 -1.4 -7.2 -1.8 -6.2 -0.6 L-4.4 1.4 L-5.4 -5.4 C-5.6 -7 -3.6 -7.4 -3.2 -5.8 L-2.2 -1.2 L-2 -7.6 C-2 -9.2 0.2 -9.2 0.2 -7.6 L0.6 -1.4 L2 -6.6 C2.4 -8.2 4.4 -7.8 4.2 -6.2 L3.4 -0.6 L5.6 -3.6 C6.4 -4.8 8 -4 7.4 -2.6 C6 0.6 5.6 4 3.6 7.6 Z" fill="#d6d6d6"/></g><path d="M11.0 8.7 V5.1 L7.4 8.7 Z" fill="#d6d6d6"/></svg>
<svg style="left:12.600000000000001px;top:413.84000000000003px;" width="24" height="22" viewBox="-12 -11 24 22"><circle cx="-1.5" cy="-2.9" r="5.5" fill="none" stroke="#d6d6d6" stroke-width="1.4" stroke-width="1.5"/><path d="M2.7 1.3 L7.4 6" stroke="#d6d6d6" stroke-width="2.2" stroke-linecap="round"/></svg>
<div style="left:11px;top:437px;width:55px;height:1px;background:#4a4a4a;"></div>
<div style="left:27.6px;top:459.2px;width:33.6px;height:33.6px;background:#000;border:1px solid #d2d2d2;"></div>
<div style="left:36.4px;top:468px;width:15.8px;height:15.6px;background:#535353;border:1px solid #d2d2d2;"></div>
<div style="left:10.6px;top:441.7px;width:34px;height:34px;background:#fff;border:1px solid #3c3c3c;"></div>
<svg style="left:52px;top:442.5px;" width="12" height="12" viewBox="0 0 12 12"><path d="M2.6 4.4 C5.6 2.6 8.4 4.4 8.6 8" fill="none" stroke="#d6d6d6" stroke-width="1.4" stroke-width="1.8"/><path d="M0.4 4.2 L4.6 0.6 L5 6.2 Z M5.6 7 L11.4 7.4 L8.6 11.4 Z" fill="#d6d6d6"/></svg>
<svg style="left:10.5px;top:481px;" width="12" height="12" viewBox="0 0 12 12"><rect x="4" y="4" width="7" height="7" fill="#000" stroke="#e0e0e0" stroke-width="1"/><rect x="5.9" y="5.9" width="3.2" height="3.2" fill="#535353"/><rect x="0.6" y="0.6" width="6.6" height="6.6" fill="#fff" stroke="#222" stroke-width="1"/></svg>
<div style="left:10.8px;top:499px;width:55px;height:18px;border:1px solid #5c5c5c;"></div>
<div style="left:11.3px;top:499.5px;width:17.4px;height:17px;background:#343434;"></div>
<div style="left:28.9px;top:499.5px;width:1px;height:17px;background:#5c5c5c;"></div>
<div style="left:47.2px;top:499.5px;width:1px;height:17px;background:#5c5c5c;"></div>
<div style="left:13.2px;top:502.4px;width:13px;height:12px;background:#fff;border:1.2px solid #111;"></div>
<div style="left:32px;top:502.4px;width:13px;height:12px;border:1.2px solid #111;background:linear-gradient(90deg,#fff,#111);"></div>
<svg style="left:50.5px;top:502.4px;" width="13" height="12" viewBox="0 0 13 12"><rect x="0.6" y="0.6" width="11.8" height="10.8" fill="#fff" stroke="#111" stroke-width="1.2"/><path d="M1.4 10.8 L11.6 1.2" stroke="#f0141e" stroke-width="2.6"/></svg>
<div style="left:10.8px;top:522.3px;width:55px;height:17.4px;border:1px solid #5c5c5c;"></div>
<div style="left:11.3px;top:522.8px;width:17.4px;height:16.4px;background:#343434;"></div>
<div style="left:28.9px;top:522.8px;width:1px;height:16.4px;background:#5c5c5c;"></div>
<div style="left:47.2px;top:522.8px;width:1px;height:16.4px;background:#5c5c5c;"></div>
<svg style="left:13.6px;top:525px;" width="13" height="12" viewBox="0 0 13 12"><circle cx="5" cy="5" r="3.9" fill="none" stroke="#d0d0d0" stroke-width="1.2"/><rect x="5.4" y="5.2" width="6.4" height="6" rx="1" fill="#d0d0d0" stroke="#d0d0d0" stroke-width="0.8"/></svg>
<svg style="left:32.4px;top:525px;" width="13" height="12" viewBox="0 0 13 12"><rect x="6" y="5.6" width="5.8" height="5.6" rx="1" fill="#d0d0d0"/><circle cx="5" cy="5" r="3.9" fill="#6a6a6a" stroke="#d0d0d0" stroke-width="1.2"/></svg>
<svg style="left:51px;top:525px;" width="13" height="12" viewBox="0 0 13 12"><circle cx="6" cy="6" r="4.2" fill="none" stroke="#6a6a6a" stroke-width="1.1"/><path d="M6 6 h3 a3 3 0 0 1 -3 3 z" fill="#6a6a6a"/></svg>
<svg style="left:27.4px;top:547px;" width="22.4" height="16" viewBox="0 0 22.4 16"><rect x="7.6" y="0.7" width="14" height="10.6" fill="#7a7a7a" stroke="#d6d6d6" stroke-width="1.3"/><rect x="0.7" y="4.6" width="12.6" height="10.6" fill="#6a6a6a" stroke="#d6d6d6" stroke-width="1.3"/><path d="M7.6 2.8 H21.4 M0.8 6.8 H13.2" stroke="#d6d6d6" stroke-width="1"/></svg>
<div style="left:32.2px;top:583.6px;width:3px;height:3px;background:#d0d0d0;border-radius:2px;"></div>
<div style="left:37.1px;top:583.6px;width:3px;height:3px;background:#d0d0d0;border-radius:2px;"></div>
<div style="left:42.0px;top:583.6px;width:3px;height:3px;background:#d0d0d0;border-radius:2px;"></div>
<div style="left:1311px;top:65px;width:1.8px;height:764px;background:#454545;"></div>
<div style="left:1348.7px;top:65px;width:2px;height:764px;background:#454545;"></div>
<div style="left:1274.8px;top:65px;width:36.2px;height:11.5px;background:#424242;"></div>
<div style="left:1312.8px;top:65px;width:36px;height:11.5px;background:#424242;"></div>
<div style="left:1350.6px;top:65px;width:95px;height:11.5px;background:#424242;"></div>
<div style="left:1274.8px;top:76.3px;width:36.2px;height:1.2px;background:#484848;"></div>
<div style="left:1312.8px;top:76.3px;width:36px;height:1.2px;background:#484848;"></div>
<div style="left:1350.6px;top:76.3px;width:95px;height:1.2px;background:#484848;"></div>
<svg style="left:1299.5px;top:68.39999999999999px;" width="6.4" height="5" viewBox="0 0 6.4 5"><path d="M2.7 0 L0 2.5 L2.7 5 Z M6 0 L3.3 2.5 L6 5 Z" fill="#d8d8d8"/></svg>
<svg style="left:1337px;top:68.39999999999999px;" width="6.4" height="5" viewBox="0 0 6.4 5"><path d="M2.7 0 L0 2.5 L2.7 5 Z M6 0 L3.3 2.5 L6 5 Z" fill="#d8d8d8"/></svg>
<div style="left:1284.3px;top:80px;width:1.9px;height:4px;background:#424242;"></div>
<div style="left:1287.5px;top:80px;width:1.9px;height:4px;background:#424242;"></div>
<div style="left:1290.7px;top:80px;width:1.9px;height:4px;background:#424242;"></div>
<div style="left:1293.8999999999999px;top:80px;width:1.9px;height:4px;background:#424242;"></div>
<div style="left:1297.1px;top:80px;width:1.9px;height:4px;background:#424242;"></div>
<div style="left:1300.3px;top:80px;width:1.9px;height:4px;background:#424242;"></div>
<div style="left:1322.3px;top:80px;width:1.9px;height:4px;background:#424242;"></div>
<div style="left:1325.5px;top:80px;width:1.9px;height:4px;background:#424242;"></div>
<div style="left:1328.7px;top:80px;width:1.9px;height:4px;background:#424242;"></div>
<div style="left:1331.8999999999999px;top:80px;width:1.9px;height:4px;background:#424242;"></div>
<div style="left:1335.1px;top:80px;width:1.9px;height:4px;background:#424242;"></div>
<div style="left:1338.3px;top:80px;width:1.9px;height:4px;background:#424242;"></div>
<div style="left:1387.5px;top:80px;width:1.9px;height:4px;background:#424242;"></div>
<div style="left:1390.7px;top:80px;width:1.9px;height:4px;background:#424242;"></div>
<div style="left:1393.9px;top:80px;width:1.9px;height:4px;background:#424242;"></div>
<div style="left:1397.1px;top:80px;width:1.9px;height:4px;background:#424242;"></div>
<div style="left:1400.3px;top:80px;width:1.9px;height:4px;background:#424242;"></div>
<div style="left:1403.5px;top:80px;width:1.9px;height:4px;background:#424242;"></div>
<div style="left:1274.8px;top:114.6px;width:36.2px;height:1.6px;background:#454545;"></div>
<div style="left:1350.6px;top:114.6px;width:95px;height:1.6px;background:#454545;"></div>
<div style="left:1312.8px;top:140.8px;width:36px;height:1.7px;background:#454545;"></div>
<div style="left:1312.8px;top:232.8px;width:36px;height:1.7px;background:#454545;"></div>
<div style="left:1312.8px;top:297.9px;width:36px;height:1.7px;background:#454545;"></div>
<div style="left:1312.8px;top:415.9px;width:36px;height:1.7px;background:#454545;"></div>
<div style="left:1312.8px;top:454.6px;width:36px;height:1.7px;background:#454545;"></div>
<div style="left:1312.8px;top:493.5px;width:36px;height:1.7px;background:#454545;"></div>
<div style="left:1322.3px;top:145.3px;width:1.9px;height:4px;background:#424242;"></div>
<div style="left:1325.5px;top:145.3px;width:1.9px;height:4px;background:#424242;"></div>
<div style="left:1328.7px;top:145.3px;width:1.9px;height:4px;background:#424242;"></div>
<div style="left:1331.8999999999999px;top:145.3px;width:1.9px;height:4px;background:#424242;"></div>
<div style="left:1335.1px;top:145.3px;width:1.9px;height:4px;background:#424242;"></div>
<div style="left:1338.3px;top:145.3px;width:1.9px;height:4px;background:#424242;"></div>
<div style="left:1322.3px;top:236.6px;width:1.9px;height:4px;background:#424242;"></div>
<div style="left:1325.5px;top:236.6px;width:1.9px;height:4px;background:#424242;"></div>
<div style="left:1328.7px;top:236.6px;width:1.9px;height:4px;background:#424242;"></div>
<div style="left:1331.8999999999999px;top:236.6px;width:1.9px;height:4px;background:#424242;"></div>
<div style="left:1335.1px;top:236.6px;width:1.9px;height:4px;background:#424242;"></div>
<div style="left:1338.3px;top:236.6px;width:1.9px;height:4px;background:#424242;"></div>
<div style="left:1322.3px;top:301.8px;width:1.9px;height:4px;background:#424242;"></div>
<div style="left:1325.5px;top:301.8px;width:1.9px;height:4px;background:#424242;"></div>
<div style="left:1328.7px;top:301.8px;width:1.9px;height:4px;background:#424242;"></div>
<div style="left:1331.8999999999999px;top:301.8px;width:1.9px;height:4px;background:#424242;"></div>
<div style="left:1335.1px;top:301.8px;width:1.9px;height:4px;background:#424242;"></div>
<div style="left:1338.3px;top:301.8px;width:1.9px;height:4px;background:#424242;"></div>
<div style="left:1322.3px;top:419.6px;width:1.9px;height:4px;background:#424242;"></div>
<div style="left:1325.5px;top:419.6px;width:1.9px;height:4px;background:#424242;"></div>
<div style="left:1328.7px;top:419.6px;width:1.9px;height:4px;background:#424242;"></div>
<div style="left:1331.8999999999999px;top:419.6px;width:1.9px;height:4px;background:#424242;"></div>
<div style="left:1335.1px;top:419.6px;width:1.9px;height:4px;background:#424242;"></div>
<div style="left:1338.3px;top:419.6px;width:1.9px;height:4px;background:#424242;"></div>
<div style="left:1322.3px;top:458.4px;width:1.9px;height:4px;background:#424242;"></div>
<div style="left:1325.5px;top:458.4px;width:1.9px;height:4px;background:#424242;"></div>
<div style="left:1328.7px;top:458.4px;width:1.9px;height:4px;background:#424242;"></div>
<div style="left:1331.8999999999999px;top:458.4px;width:1.9px;height:4px;background:#424242;"></div>
<div style="left:1335.1px;top:458.4px;width:1.9px;height:4px;background:#424242;"></div>
<div style="left:1338.3px;top:458.4px;width:1.9px;height:4px;background:#424242;"></div>
<svg style="left:1281.4px;top:88.3px;" width="24" height="22" viewBox="-12.0 -11.0 24 22"><path d="M0 -8 L6.8 -4.2 V4 L0 8 L-6.8 4 V-4.2 Z M-6.8 -4.2 L0 -0.4 L6.8 -4.2 M0 -0.4 V8" fill="none" stroke="#d6d6d6" stroke-width="1.2" stroke-linejoin="round"/></svg>
<svg style="left:1318.8px;top:88.0px;" width="24" height="22" viewBox="-12.0 -11.0 24 22"><path d="M-8.6 1.6 C-8.6 -3.6 -3 -6.4 2 -6.2 C6.6 -6 9 -3.4 8.6 -0.6 C8.2 2 5 1.2 3.6 2.6 C2.4 4 4 5.4 2 6.2 C-2 7.4 -8.6 6 -8.6 1.6 Z" fill="#d6d6d6"/><g fill="#535353"><circle cx="-5.4" cy="0.6" r="1.4"/><circle cx="-3" cy="3.6" r="1.4"/><circle cx="0.6" cy="4" r="1.3"/><circle cx="-2.4" cy="-3" r="1.4"/><circle cx="1.8" cy="-3.8" r="1.3"/><circle cx="5.4" cy="-2.4" r="1.3"/></g></svg>
<svg style="left:1322.8px;top:118px;" width="16" height="15" viewBox="0 0 16 15"><defs><linearGradient id="cg" x1="0" y1="0" x2="1" y2="1"><stop offset="0" stop-color="#1a1a1a"/><stop offset="0.55" stop-color="#8a8a8a"/><stop offset="1" stop-color="#e8e8e8"/></linearGradient></defs><path d="M0.8 0.8 C8 1.6 14 7 15.2 14.2 H0.8 Z" fill="url(#cg)" stroke="#d6d6d6" stroke-width="1.2"/></svg>
<svg style="left:1318.8px;top:153.6px;" width="24" height="22" viewBox="-12.0 -11.0 24 22"><rect x="-8" y="-6" width="16" height="1.3" fill="#d6d6d6"/><rect x="-8" y="-2" width="16" height="2.4" fill="#d6d6d6"/><rect x="-8" y="2.6" width="16" height="3.6" fill="#d6d6d6"/></svg>
<svg style="left:1322.5px;top:184px;" width="16.6" height="13.4" viewBox="0 0 16.6 13.4"><defs><linearGradient id="gp"><stop offset="0" stop-color="#2a2a2a"/><stop offset="1" stop-color="#dcdcdc"/></linearGradient></defs><rect x="0.65" y="0.65" width="15.3" height="12.1" rx="1" fill="url(#gp)" stroke="#d6d6d6" stroke-width="1.3"/></svg>
<svg style="left:1318.8px;top:207.4px;" width="24" height="22" viewBox="-12.0 -11.0 24 22"><circle cx="-2.8" cy="-2.6" r="5.7" fill="#c8c8c8"/><circle cx="2.4" cy="2.4" r="5.6" fill="#808080" stroke="#d6d6d6" stroke-width="1"/></svg>
<svg style="left:1318.8px;top:245.3px;" width="24" height="22" viewBox="-12.0 -11.0 24 22"><circle cx="0" cy="0" r="5.4" fill="#d0d0d0"/><circle cx="0" cy="0" r="7.6" fill="none" stroke="#d6d6d6" stroke-width="1" stroke-dasharray="1.4 1.4"/></svg>
<svg style="left:1318.8px;top:272.0px;" width="24" height="22" viewBox="-12.0 -11.0 24 22"><rect x="-3.8" y="-7.4" width="11.6" height="11.6" rx="1" fill="none" stroke="#d6d6d6" stroke-width="1.4" stroke-width="1.3"/><rect x="-7.6" y="0.4" width="5" height="5" fill="#535353" stroke="#d6d6d6" stroke-width="1.2"/><rect x="-5" y="3" width="5" height="5" fill="#535353" stroke="#d6d6d6" stroke-width="1.2"/></svg>
<div style="left:1318px;top:310.2px;width:25.6px;height:20.6px;background:#2e2e2e;border-radius:2px;"></div>
<svg style="left:1318.8px;top:309.8px;" width="24" height="22" viewBox="-12.0 -11.0 24 22"><path d="M0 -7.6 L7.4 -3 L0 1.6 L-7.4 -3 Z" fill="#f2f2f2"/><path d="M-7.4 1.4 L0 6 L7.4 1.4" fill="none" stroke="#f2f2f2" stroke-width="1.8"/></svg>
<svg style="left:1318.8px;top:336.8px;" width="24" height="22" viewBox="-12.0 -11.0 24 22"><rect x="-8" y="-5.8" width="16" height="11.4" rx="1" fill="#a8a8a8"/><g fill="#5a5a5a"><rect x="-6.8" y="-3" width="4" height="3.2"/><rect x="-2" y="-3" width="4" height="3.2"/><rect x="2.8" y="-3" width="4" height="3.2"/><rect x="-6.8" y="1" width="4" height="3.2"/><rect x="-2" y="1" width="4" height="3.2"/><rect x="2.8" y="1" width="4" height="3.2"/></g></svg>
<svg style="left:1318.8px;top:363.3px;" width="24" height="22" viewBox="-12.0 -11.0 24 22"><path d="M-4.6 1 H4.6 L3.8 8.4 H-3.8 Z" fill="#d6d6d6"/><path d="M-2.8 1 L-4.4 -4.4 L-3 -5 L-1 0.6 M0.2 1 V-4.6 M2.6 1 L4.6 -3.4" stroke="#d6d6d6" stroke-width="1.4" fill="none"/><path d="M-5.6 -5.4 L-3.8 -8.6 L-2.2 -5.6 Z M-1 -5.4 C-1.4 -7.6 0.2 -9 0.4 -9.6 C1 -8.6 1.8 -7 1.2 -5.4 Z M3.6 -4 C3.2 -6 5 -6.6 6.6 -5.4 C7.2 -4.2 5.6 -3 4.6 -3.2 Z" fill="#d6d6d6"/></svg>
<svg style="left:1318.8px;top:389.4px;" width="24" height="22" viewBox="-12.0 -11.0 24 22"><circle cx="0" cy="-4.2" r="3.5" fill="#d6d6d6"/><circle cx="-3.9" cy="1" r="3.5" fill="#d6d6d6"/><circle cx="3.9" cy="1" r="3.5" fill="#d6d6d6"/><path d="M-1 -1 H1 L1 4.6 L3.6 7.6 H-3.6 L-1 4.6 Z" fill="#d6d6d6"/></svg>
<svg style="left:1318.8px;top:427.8px;" width="24" height="22" viewBox="-12.0 -11.0 24 22"><path d="M-1.4 -6 H-7 V7 H6 V1.4" fill="none" stroke="#d6d6d6" stroke-width="1.7"/><path d="M-1 1 L6.6 -6.6 M1.4 -7.2 H7.2 V-1.4" fill="none" stroke="#d6d6d6" stroke-width="1.7"/></svg>
<svg style="left:1318.8px;top:467.0px;" width="24" height="22" viewBox="-12.0 -11.0 24 22"><rect x="-8" y="-7.6" width="10.6" height="10" rx="1.2" fill="none" stroke="#d6d6d6" stroke-width="1.4" stroke-width="1.3"/><rect x="-3.6" y="-1.8" width="11.6" height="9.6" rx="1.2" fill="#535353" stroke="#d6d6d6" stroke-width="1.3"/></svg>
<svg style="left:1356.6px;top:88.0px;" width="24" height="22" viewBox="-12.0 -11.0 24 22"><rect x="-7.4" y="-7.4" width="11.4" height="13" rx="1" fill="none" stroke="#d6d6d6" stroke-width="1.4" stroke-width="1.1"/><rect x="-4.6" y="-5.6" width="12" height="13.2" rx="1" fill="#535353" stroke="#d6d6d6" stroke-width="1.2"/><path d="M1.8 -5.4 H5 V0.4 L3.4 -1.2 L1.8 0.4 Z" fill="#d6d6d6"/></svg>
<div class="t" style="left:1386.2px;top:92px;font-size:10.5px;line-height:15px;color:#f4f4f4;font-weight:bold;width:21.4px;overflow:hidden;"><span style="transform:scaleX(0.9243);transform-origin:0 50%;display:inline-block;">Libraries</span></div>
<div style="left:1406.8px;top:59.5px;width:40px;height:52.3px;background:#3f3f3f;border-radius:3px 0 0 2px;"></div>
<div style="left:1408px;top:60.5px;width:38px;height:11px;background:#424242;"></div>
<div style="left:1408px;top:72.6px;width:38px;height:38px;background:#535353;"></div>
<svg style="left:1416px;top:63.5px;" width="7" height="5.4" viewBox="0 0 7 5.4"><path d="M0.2 0 L3 2.7 L0.2 5.4 Z M3.8 0 L6.6 2.7 L3.8 5.4 Z" fill="#d8d8d8"/></svg>
<svg style="left:1432.2px;top:63.099999999999994px;" width="6.4" height="6.4" viewBox="0 0 6.4 6.4"><path d="M0.4 0.4 L6.0 6.0 M6.0 0.4 L0.4 6.0" stroke="#dcdcdc" stroke-width="1.7"/></svg>
<div style="left:1417.5px;top:75.6px;width:1.9px;height:4px;background:#454545;"></div>
<div style="left:1420.7px;top:75.6px;width:1.9px;height:4px;background:#454545;"></div>
<div style="left:1423.9px;top:75.6px;width:1.9px;height:4px;background:#454545;"></div>
<div style="left:1427.1px;top:75.6px;width:1.9px;height:4px;background:#454545;"></div>
<div style="left:1430.3px;top:75.6px;width:1.9px;height:4px;background:#454545;"></div>
<div style="left:1433.5px;top:75.6px;width:1.9px;height:4px;background:#454545;"></div>
<svg style="left:1414.3px;top:83.9px;" width="24" height="22" viewBox="-12.0 -11.0 24 22"><path d="M-7.4 -4.8 H7.4 M-7.4 0 H7.4 M-7.4 4.8 H7.4" stroke="#d6d6d6" stroke-width="1.2"/><circle cx="-2.8" cy="-4.8" r="1.9" fill="#535353" stroke="#d6d6d6" stroke-width="1.2"/><circle cx="3.2" cy="0" r="1.9" fill="#535353" stroke="#d6d6d6" stroke-width="1.2"/><circle cx="-1.6" cy="4.8" r="1.9" fill="#535353" stroke="#d6d6d6" stroke-width="1.2"/></svg>
<div style="left:1070px;top:284px;width:242.1px;height:456px;overflow:hidden;"><div style="left:13.4px;top:11.8px;width:228.7px;height:430px;background:#3a3a3a;box-shadow:-1px 1px 6px rgba(0,0,0,0.25);"></div></div>
<div style="left:1084.4px;top:719.2px;width:226.7999999999999px;height:5.8px;background:#4b4b4b;"></div>
<div style="left:1084.4px;top:299.2px;width:226.7999999999999px;height:25.6px;background:#424242;"></div>
<div style="left:1084.4px;top:299.2px;width:45.2px;height:26px;background:#535353;"></div>
<div style="left:1084.4px;top:324.8px;width:226.7999999999999px;height:393.4px;background:#535353;"></div>
<div style="left:1169.4px;top:299.2px;width:1px;height:25.6px;background:#3a3a3a;"></div>
<div style="left:1208.2px;top:299.2px;width:1px;height:25.6px;background:#3a3a3a;"></div>
<div style="left:1250px;top:299.2px;width:1px;height:25.6px;background:#3a3a3a;"></div>
<div class="t" style="transform:scaleX(0.8124);transform-origin:0 50%;left:1093.6px;top:305.3px;font-size:10px;line-height:15px;color:#f4f4f4;font-weight:bold;">Layers</div>
<div class="t" style="left:1138px;top:304.9px;font-size:10px;line-height:15px;color:#b8b8b8;font-weight:bold;width:31px;overflow:hidden;"><span style="transform:scaleX(0.8886);transform-origin:0 50%;display:inline-block;">Swatches</span></div>
<div class="t" style="left:1177.4px;top:304.9px;font-size:10px;line-height:15px;color:#b8b8b8;font-weight:bold;width:30.6px;overflow:hidden;"><span style="transform:scaleX(0.8747);transform-origin:0 50%;display:inline-block;">Brushes</span></div>
<div class="t" style="left:1216.8px;top:304.9px;font-size:10px;line-height:15px;color:#b8b8b8;font-weight:bold;width:33px;overflow:hidden;"><span style="transform:scaleX(0.8924);transform-origin:0 50%;display:inline-block;">Symbols</span></div>
<svg style="left:1272.6px;top:308.6px;" width="10" height="8" viewBox="0 0 10 8"><path d="M0.6 0.8 L4 4 L0.6 7.2 M5.4 0.8 L8.8 4 L5.4 7.2" fill="none" stroke="#e0e0e0" stroke-width="1.3"/></svg>
<div style="left:1288.6px;top:307.4px;width:1.2px;height:10.4px;background:#d0d0d0;"></div>
<svg style="left:1295.6px;top:308px;" width="10.4" height="9" viewBox="0 0 10.4 9"><path d="M0 1 H10.4 M0 4.5 H10.4 M0 8 H10.4" stroke="#d8d8d8" stroke-width="1.3"/></svg>
<div style="left:1089.3px;top:331.6px;width:216px;height:368px;border:1px solid #5b5b5b;"></div>
<div style="left:1095.6px;top:335.6px;width:182.4px;height:20.6px;background:#464646;border:1px solid #626262;border-radius:2px;"></div>
<svg style="left:1100.5px;top:340px;" width="13" height="13" viewBox="0 0 13 13"><circle cx="5" cy="5" r="3.8" fill="none" stroke="#dcdcdc" stroke-width="1.5"/><path d="M7.8 7.8 L11.6 11.6" stroke="#dcdcdc" stroke-width="1.8" stroke-linecap="round"/></svg>
<div class="t" style="transform:scaleX(0.8791);transform-origin:0 50%;left:1122px;top:338.4px;font-size:12px;line-height:16px;color:#646464;">Search All</div>
<svg style="left:1287px;top:339px;" width="14" height="15" viewBox="0 0 14 15"><path d="M0.4 0.6 H13.6 L8.4 7.2 V13.4 L5.6 11.4 V7.2 Z" fill="#e0e0e0"/></svg>
<div style="left:1089.8px;top:365.4px;width:215.4px;height:19.0px;background:#50637c;"></div>
<div style="left:1089.8px;top:384.3px;width:215.4px;height:1px;background:#4a4a4a;"></div>
<svg style="left:1093.6px;top:370.59999999999997px;" width="12.6" height="8.6" viewBox="0 0 12.6 8.6"><path d="M0.2 4.3 C3 -0.6 9.6 -0.6 12.4 4.3 C9.6 9.2 3 9.2 0.2 4.3 Z" fill="#d8d8d8"/><circle cx="6.3" cy="4.3" r="2.7" fill="none" stroke="#5a5a5a" stroke-width="1"/><circle cx="6.5" cy="4" r="0.9" fill="#5a5a5a"/></svg>
<div style="left:1109.6px;top:365.4px;width:1px;height:19.6px;background:#44597a;"></div>
<div style="left:1129px;top:365.4px;width:1px;height:19.6px;background:#44597a;"></div>
<div style="left:1130.4px;top:366.5px;width:3.1px;height:17.200000000000003px;background:#f2423f;border-radius:1.5px;"></div>
<svg style="left:1140.6px;top:371.0px;" width="5.4" height="8.4" viewBox="0 0 5.4 8.4"><path d="M0.8 0.8 L4.2 4.2 L0.8 7.6" fill="none" stroke="#f4f4f4" stroke-width="1.4"/></svg>
<div style="left:1158.1px;top:366.9px;width:17px;height:17px;background:#fff;border:1.5px solid #0a0a0a;border-radius:2px;"></div>
<div class="t" style="transform:scaleX(0.9300);transform-origin:0 50%;left:1179.6px;top:367.8px;font-size:9.8px;line-height:15px;color:#f2f2f2;">Layer 2</div>
<div style="left:1270.8px;top:365.4px;width:1px;height:19.6px;background:#44597a;"></div>
<svg style="left:1277.2px;top:370.5px;" width="9.4" height="9.4" viewBox="0 0 9.4 9.4"><circle cx="4.7" cy="4.7" r="3.4" fill="#9a9a9a" stroke="#e6e6e6" stroke-width="1.2"/></svg>
<div style="left:1089.8px;top:403.90000000000003px;width:215.4px;height:1px;background:#4a4a4a;"></div>
<svg style="left:1093.6px;top:390.2px;" width="12.6" height="8.6" viewBox="0 0 12.6 8.6"><path d="M0.2 4.3 C3 -0.6 9.6 -0.6 12.4 4.3 C9.6 9.2 3 9.2 0.2 4.3 Z" fill="#d8d8d8"/><circle cx="6.3" cy="4.3" r="2.7" fill="none" stroke="#5a5a5a" stroke-width="1"/><circle cx="6.5" cy="4" r="0.9" fill="#5a5a5a"/></svg>
<div style="left:1109.6px;top:385.0px;width:1px;height:19.6px;background:#4a4a4a;"></div>
<div style="left:1129px;top:385.0px;width:1px;height:19.6px;background:#4a4a4a;"></div>
<div style="left:1130.4px;top:386.1px;width:3.1px;height:17.200000000000003px;background:#4a7df2;border-radius:1.5px;"></div>
<div style="left:1158.1px;top:386.5px;width:17px;height:17px;background:#fff;border:1.5px solid #0a0a0a;border-radius:2px;"></div>
<div class="t" style="transform:scaleX(0.9300);transform-origin:0 50%;left:1179.6px;top:387.4px;font-size:9.8px;line-height:15px;color:#f2f2f2;">Layer 1</div>
<div style="left:1270.8px;top:385.0px;width:1px;height:19.6px;background:#4a4a4a;"></div>
<svg style="left:1277.2px;top:390.1px;" width="9.4" height="9.4" viewBox="0 0 9.4 9.4"><circle cx="4.7" cy="4.7" r="3.4" fill="none" stroke="#e6e6e6" stroke-width="1.2"/></svg>
<div style="left:1089.8px;top:423.5px;width:215.4px;height:1px;background:#4a4a4a;"></div>
<svg style="left:1093.6px;top:409.79999999999995px;" width="12.6" height="8.6" viewBox="0 0 12.6 8.6"><path d="M0.2 4.3 C3 -0.6 9.6 -0.6 12.4 4.3 C9.6 9.2 3 9.2 0.2 4.3 Z" fill="#d8d8d8"/><circle cx="6.3" cy="4.3" r="2.7" fill="none" stroke="#5a5a5a" stroke-width="1"/><circle cx="6.5" cy="4" r="0.9" fill="#5a5a5a"/></svg>
<div style="left:1109.6px;top:404.59999999999997px;width:1px;height:19.6px;background:#4a4a4a;"></div>
<div style="left:1129px;top:404.59999999999997px;width:1px;height:19.6px;background:#4a4a4a;"></div>
<div style="left:1130.4px;top:405.7px;width:3.1px;height:17.200000000000003px;background:#4b48f2;border-radius:1.5px;"></div>
<svg style="left:1140.6px;top:410.2px;" width="5.4" height="8.4" viewBox="0 0 5.4 8.4"><path d="M0.8 0.8 L4.2 4.2 L0.8 7.6" fill="none" stroke="#f4f4f4" stroke-width="1.4"/></svg>
<div style="left:1158.1px;top:406.09999999999997px;width:17px;height:17px;background:#fff;border:1.5px solid #0a0a0a;border-radius:2px;"></div>
<div class="t" style="transform:scaleX(0.9300);transform-origin:0 50%;left:1179.6px;top:407.0px;font-size:9.8px;line-height:15px;color:#f2f2f2;">Layer 4</div>
<div style="left:1270.8px;top:404.59999999999997px;width:1px;height:19.6px;background:#4a4a4a;"></div>
<svg style="left:1277.2px;top:409.7px;" width="9.4" height="9.4" viewBox="0 0 9.4 9.4"><circle cx="4.7" cy="4.7" r="3.4" fill="#9a9a9a" stroke="#e6e6e6" stroke-width="1.2"/></svg>
<div style="left:1089.8px;top:443.1px;width:215.4px;height:1px;background:#4a4a4a;"></div>
<svg style="left:1093.6px;top:429.4px;" width="12.6" height="8.6" viewBox="0 0 12.6 8.6"><path d="M0.2 4.3 C3 -0.6 9.6 -0.6 12.4 4.3 C9.6 9.2 3 9.2 0.2 4.3 Z" fill="#d8d8d8"/><circle cx="6.3" cy="4.3" r="2.7" fill="none" stroke="#5a5a5a" stroke-width="1"/><circle cx="6.5" cy="4" r="0.9" fill="#5a5a5a"/></svg>
<div style="left:1109.6px;top:424.2px;width:1px;height:19.6px;background:#4a4a4a;"></div>
<div style="left:1129px;top:424.2px;width:1px;height:19.6px;background:#4a4a4a;"></div>
<div style="left:1130.4px;top:425.3px;width:3.1px;height:17.200000000000003px;background:#45ee45;border-radius:1.5px;"></div>
<svg style="left:1140.6px;top:429.8px;" width="5.4" height="8.4" viewBox="0 0 5.4 8.4"><path d="M0.8 0.8 L4.2 4.2 L0.8 7.6" fill="none" stroke="#f4f4f4" stroke-width="1.4"/></svg>
<div style="left:1158.1px;top:425.7px;width:17px;height:17px;background:#fff;border:1.5px solid #0a0a0a;border-radius:2px;"></div>
<div class="t" style="transform:scaleX(0.9300);transform-origin:0 50%;left:1179.6px;top:426.6px;font-size:9.8px;line-height:15px;color:#f2f2f2;">Layer 3</div>
<div style="left:1270.8px;top:424.2px;width:1px;height:19.6px;background:#4a4a4a;"></div>
<svg style="left:1277.2px;top:429.3px;" width="9.4" height="9.4" viewBox="0 0 9.4 9.4"><circle cx="4.7" cy="4.7" r="3.4" fill="none" stroke="#e6e6e6" stroke-width="1.2"/></svg>
<svg style="left:1298.6px;top:365.8px;" width="6.6" height="6" viewBox="0 0 6.6 6"><path d="M0 0 H6.6 V6 Z" fill="#f0f0f0"/></svg>
<svg style="left:1158px;top:366.7px;" width="17.4" height="17.4" viewBox="0 0 17.4 17.4"><rect x="1.60" y="4.4" width="2.9" height="2.8" fill="#c9b898"/><rect x="4.44" y="4.4" width="2.9" height="2.8" fill="#a8bda6"/><rect x="7.28" y="4.4" width="2.9" height="2.8" fill="#b96a2e"/><rect x="10.12" y="4.4" width="2.9" height="2.8" fill="#272560"/><rect x="12.96" y="4.4" width="2.9" height="2.8" fill="#2d8b3a"/><rect x="1.60" y="11.6" width="2.9" height="2.8" fill="#c9c5b8"/><rect x="4.44" y="11.6" width="2.9" height="2.8" fill="#654327"/><rect x="7.28" y="11.6" width="2.9" height="2.8" fill="#0000cc"/><rect x="10.12" y="11.6" width="2.9" height="2.8" fill="#97502a"/><rect x="12.96" y="11.6" width="2.9" height="2.8" fill="#960e3c"/></svg>
<svg style="left:1158px;top:366.7px;" width="17.4" height="17.4" viewBox="0 0 17.4 17.4"><g fill="#c01a2a"><circle cx="3" cy="5.8" r="1.3"/><circle cx="14.4" cy="5.8" r="1.3"/><circle cx="8.7" cy="13" r="1.3"/></g><g fill="#c89b08"><circle cx="8.7" cy="5.8" r="1.3"/><circle cx="3" cy="13" r="1.3"/></g><g fill="#0a93c4"><circle cx="5.8" cy="5.8" r="1.2"/><circle cx="11.6" cy="13" r="1.2"/></g></svg>
<svg style="left:1158px;top:405.9px;" width="17.4" height="17.4" viewBox="0 0 17.4 17.4"><rect x="1.60" y="4.6" width="2.9" height="1.8" fill="#c9b898"/><rect x="4.44" y="4.6" width="2.9" height="1.8" fill="#a8bda6"/><rect x="7.28" y="4.6" width="2.9" height="1.8" fill="#b96a2e"/><rect x="10.12" y="4.6" width="2.9" height="1.8" fill="#272560"/><rect x="12.96" y="4.6" width="2.9" height="1.8" fill="#2d8b3a"/><rect x="1.60" y="6.6" width="2.9" height="1.2" fill="#6a2103"/><rect x="4.44" y="6.6" width="2.9" height="1.2" fill="#6f6f47"/><rect x="7.28" y="6.6" width="2.9" height="1.2" fill="#c89b08"/><rect x="10.12" y="6.6" width="2.9" height="1.2" fill="#c9b90e"/><rect x="12.96" y="6.6" width="2.9" height="1.2" fill="#c01a2a"/><rect x="1.60" y="11.4" width="2.9" height="1.8" fill="#c9c5b8"/><rect x="4.44" y="11.4" width="2.9" height="1.8" fill="#654327"/><rect x="7.28" y="11.4" width="2.9" height="1.8" fill="#0000cc"/><rect x="10.12" y="11.4" width="2.9" height="1.8" fill="#97502a"/><rect x="12.96" y="11.4" width="2.9" height="1.8" fill="#960e3c"/><rect x="1.60" y="13.4" width="2.9" height="1.2" fill="#7b68a8"/><rect x="4.44" y="13.4" width="2.9" height="1.2" fill="#c4693a"/><rect x="7.28" y="13.4" width="2.9" height="1.2" fill="#c97a0d"/><rect x="10.12" y="13.4" width="2.9" height="1.2" fill="#c9174f"/><rect x="12.96" y="13.4" width="2.9" height="1.2" fill="#a98b68"/></svg>
<svg style="left:1158px;top:425.5px;" width="17.4" height="17.4" viewBox="0 0 17.4 17.4"><rect x="1.60" y="5.2" width="2.9" height="2" fill="#b52a3c"/><rect x="4.44" y="5.2" width="2.9" height="2" fill="#dcbe5c"/><rect x="7.28" y="5.2" width="2.9" height="2" fill="#00528a"/><rect x="10.12" y="5.2" width="2.9" height="2" fill="#ffdd00"/><rect x="12.96" y="5.2" width="2.9" height="2" fill="#ffc20f"/><rect x="1.60" y="12.2" width="2.9" height="2" fill="#9c8162"/><rect x="4.44" y="12.2" width="2.9" height="2" fill="#696a66"/><rect x="7.28" y="12.2" width="2.9" height="2" fill="#7a244c"/><rect x="10.12" y="12.2" width="2.9" height="2" fill="#dde9b5"/><rect x="12.96" y="12.2" width="2.9" height="2" fill="#ffd83f"/></svg>
<div class="t" style="transform:scaleX(0.9109);transform-origin:0 50%;left:1088.9px;top:700.9px;font-size:10.5px;line-height:15px;color:#dcdcdc;">4 La...</div>
<svg style="left:1128.4px;top:703.4px;" width="14" height="13" viewBox="0 0 14 13"><rect x="1.4" y="1.4" width="9.4" height="9.4" fill="none" stroke="#dcdcdc" stroke-width="1.4"/><g fill="#dcdcdc"><rect x="0" y="0" width="2.6" height="2.6"/><rect x="9.4" y="0" width="2.6" height="2.6"/><rect x="0" y="9.4" width="2.6" height="2.6"/></g><path d="M7.4 5.4 H13.2 V12.8 L10.3 10.6 L7.4 12.8 Z" fill="#dcdcdc" stroke="#535353" stroke-width="0.8"/></svg>
<svg style="left:1151px;top:702.6px;" width="13" height="13" viewBox="0 0 13 13"><path d="M5 2.6 H0.8 V11.8 H10 V7.6" fill="none" stroke="#dcdcdc" stroke-width="1.4"/><path d="M5.4 7.2 L11.6 1 M7.6 0.8 H12 V5.2" fill="none" stroke="#dcdcdc" stroke-width="1.4"/></svg>
<svg style="left:1175.5px;top:703.5px;" width="12" height="12" viewBox="0 0 12 12"><circle cx="4.6" cy="4.6" r="3.6" fill="none" stroke="#747474" stroke-width="1.3"/><path d="M7.4 7.4 L11 11" stroke="#747474" stroke-width="1.6"/></svg>
<svg style="left:1199.5px;top:703px;" width="13" height="13" viewBox="0 0 13 13"><rect x="4.4" y="4.4" width="7.6" height="7.6" rx="1" fill="none" stroke="#9a9a9a" stroke-width="1.2"/><rect x="0.7" y="0.7" width="8" height="8" rx="1" fill="#535353" stroke="#dcdcdc" stroke-width="1.3"/><rect x="3" y="3" width="3.6" height="3.6" fill="#dcdcdc"/></svg>
<svg style="left:1222.5px;top:702.5px;" width="16" height="13" viewBox="0 0 16 13"><rect x="6.6" y="3" width="8.4" height="8.4" rx="1" fill="none" stroke="#dcdcdc" stroke-width="1.3"/><path d="M10.8 5 V9.4 M8.6 7.2 H13" stroke="#dcdcdc" stroke-width="1.2"/><path d="M1.6 0.6 V5 H5 M3.4 3.2 L5.2 5 L3.4 6.8" fill="none" stroke="#dcdcdc" stroke-width="1.2"/></svg>
<svg style="left:1250px;top:703.5px;" width="11" height="11" viewBox="0 0 11 11"><rect x="0.7" y="0.7" width="9.6" height="9.6" rx="1" fill="none" stroke="#dcdcdc" stroke-width="1.3"/><path d="M5.5 3 V8 M3 5.5 H8" stroke="#dcdcdc" stroke-width="1.2"/></svg>
<svg style="left:1274px;top:702.5px;" width="11" height="13" viewBox="0 0 11 13"><path d="M0.4 2.6 H10.6 M3.6 2.4 V0.8 H7.4 V2.4" fill="none" stroke="#dcdcdc" stroke-width="1.2"/><path d="M1.6 3.4 L2.2 12.2 H8.8 L9.4 3.4" fill="none" stroke="#dcdcdc" stroke-width="1.3"/><path d="M4 5 V10.6 M5.5 5 V10.6 M7 5 V10.6" stroke="#dcdcdc" stroke-width="0.9"/></svg>
<div style="left:1191.6px;top:720.4px;width:1.3px;height:3.6px;background:#3c3c3c;"></div>
<div style="left:1194.1999999999998px;top:720.4px;width:1.3px;height:3.6px;background:#3c3c3c;"></div>
<div style="left:1196.8px;top:720.4px;width:1.3px;height:3.6px;background:#3c3c3c;"></div>
<div style="left:1199.3999999999999px;top:720.4px;width:1.3px;height:3.6px;background:#3c3c3c;"></div>
<div style="left:1202.0px;top:720.4px;width:1.3px;height:3.6px;background:#3c3c3c;"></div>
</body></html>
